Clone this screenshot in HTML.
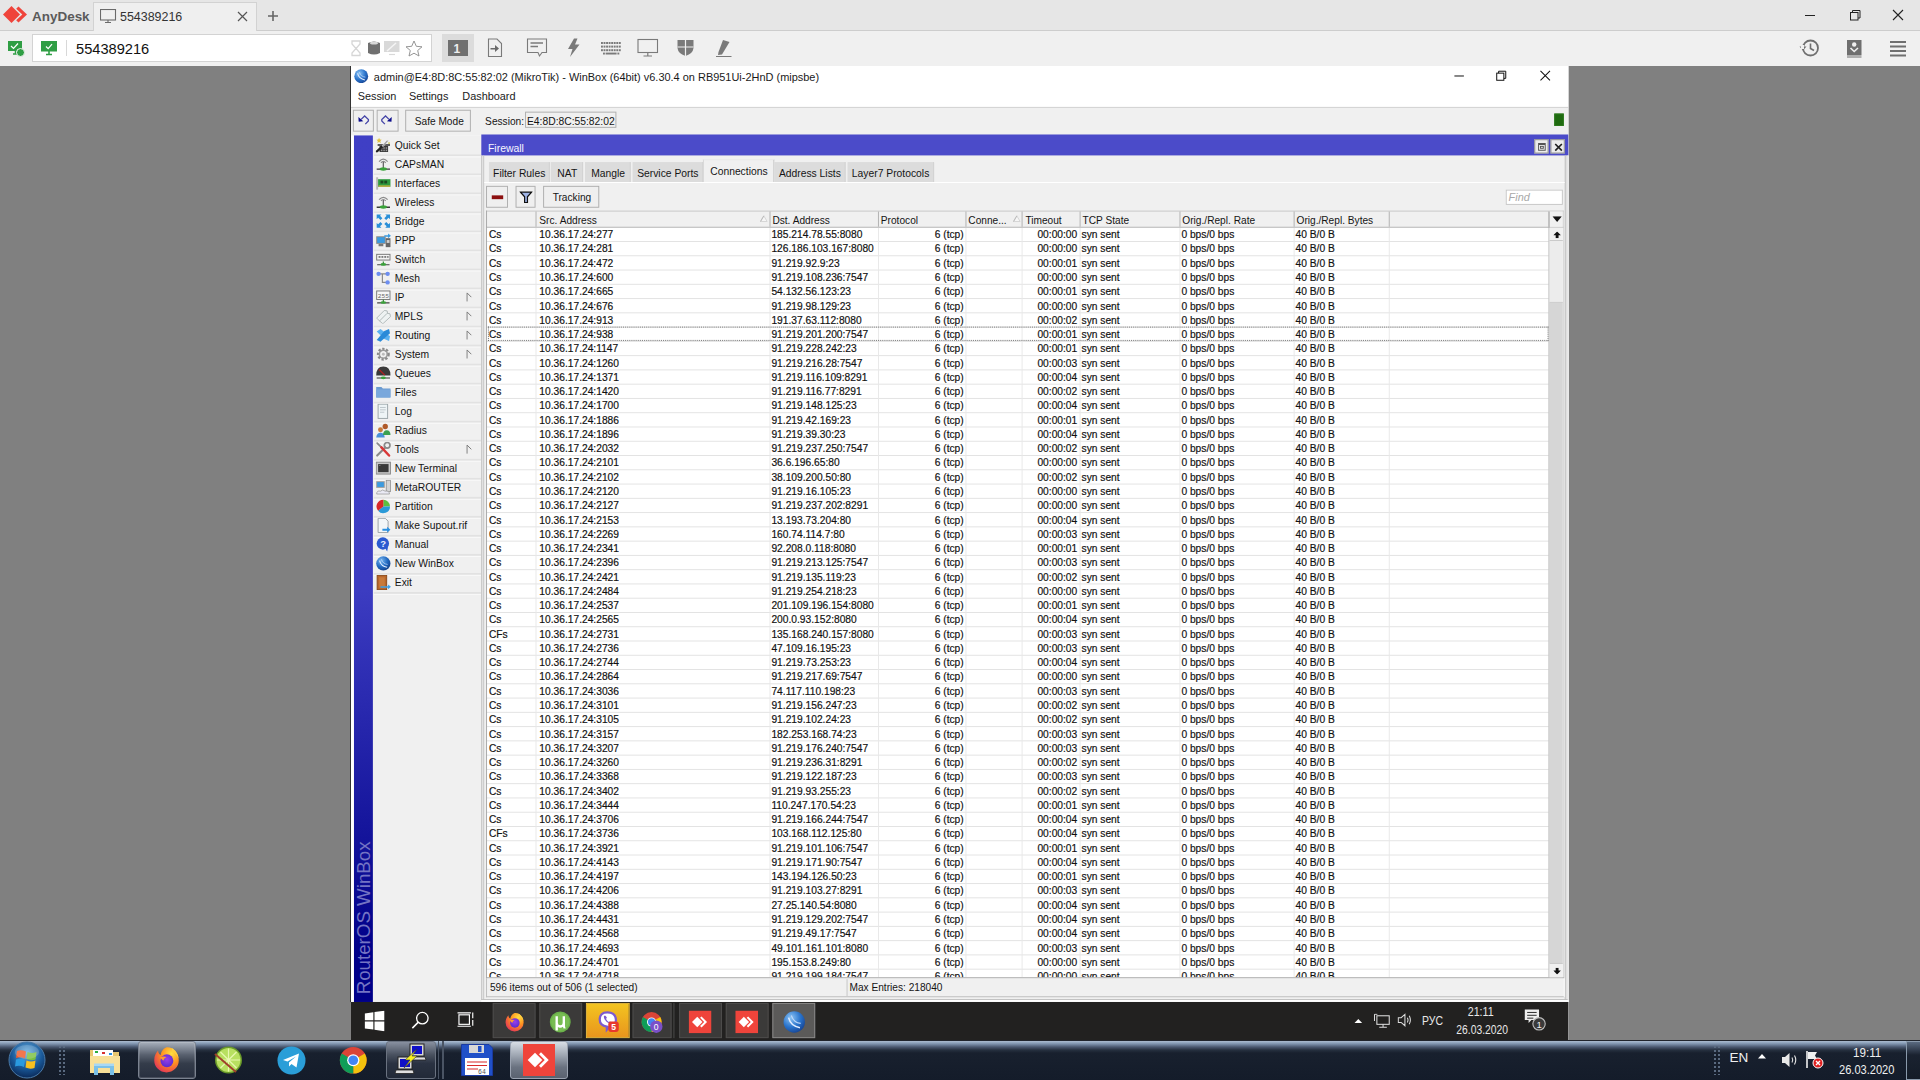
<!DOCTYPE html><html><head><meta charset="utf-8"><style>html,body{margin:0;padding:0;}body{width:1920px;height:1080px;overflow:hidden;position:relative;background:#808080;font-family:"Liberation Sans", sans-serif;color:#222;}div{box-sizing:border-box;}.r{position:absolute;left:0;height:15px;width:100%;}.c{position:absolute;top:1.2px;white-space:nowrap;font-size:11.7px;line-height:12px;transform:scaleX(0.92);transform-origin:0 0;color:#111;-webkit-text-stroke:0.2px #111;}.cr{transform-origin:100% 0;}</style></head><body><div style="position:absolute;left:0px;top:0px;width:1920px;height:31px;background:#e6e6e6;border-bottom:1px solid #cdcdcd;"></div><svg style="position:absolute;left:2px;top:5px" width="26" height="20" viewBox="0 0 26 20"><path d="M1 9.5 L9.5 1 L18 9.5 L9.5 18 Z" fill="#ef443b"/><path d="M16.5 1.5 L25 9.5 L16.5 17.5 L14.2 15.2 L20.3 9.5 L14.2 3.8 Z" fill="#ef443b"/></svg><div style="position:absolute;left:32px;top:10.04px;font-size:13.6px;line-height:13.6px;white-space:nowrap;transform:scaleX(0.99);transform-origin:0 0;font-weight:bold;color:#5a5a5a;">AnyDesk</div><div style="position:absolute;left:93px;top:2px;width:164px;height:29px;background:#efefef;border:1px solid #d2d2d2;border-bottom:none;"></div><svg style="position:absolute;left:100px;top:9px" width="17" height="15" viewBox="0 0 17 15"><rect x="0.5" y="0.5" width="15" height="10.5" fill="none" stroke="#6a6a6a" stroke-width="1.1"/><path d="M8 11 V13.5 M5 13.5 H11" stroke="#6a6a6a" stroke-width="1.1"/></svg><div style="position:absolute;left:120px;top:9.84px;font-size:13.6px;line-height:13.6px;white-space:nowrap;transform:scaleX(0.915);transform-origin:0 0;color:#333;">554389216</div><svg style="position:absolute;left:237px;top:11px" width="11" height="11" viewBox="0 0 11 11"><path d="M1 1 L10 10 M10 1 L1 10" stroke="#555" stroke-width="1.2"/></svg><svg style="position:absolute;left:267px;top:10px" width="12" height="12" viewBox="0 0 12 12"><path d="M6 1 V11 M1 6 H11" stroke="#666" stroke-width="1.6"/></svg><svg style="position:absolute;left:1803px;top:9px" width="104" height="13" viewBox="0 0 104 13"><path d="M2 6.5 H12" stroke="#222" stroke-width="1"/><rect x="47.5" y="3.5" width="7.5" height="7.5" fill="none" stroke="#222"/><path d="M49.5 3.5 V1.5 H57 V9 H55" fill="none" stroke="#222"/><path d="M90 1 L100 11 M100 1 L90 11" stroke="#222" stroke-width="1.1"/></svg><div style="position:absolute;left:0px;top:31px;width:1920px;height:35px;background:#f0f0f0;"></div><svg style="position:absolute;left:7px;top:40px" width="18" height="17" viewBox="0 0 18 17"><rect x="1" y="1" width="14" height="10" fill="#2f9e44"/><path d="M6 14 H11 M8.5 11 V14" stroke="#2f9e44" stroke-width="1.5"/><path d="M4 6 L6.5 8.5 L11 3.5" fill="none" stroke="#fff" stroke-width="1.2"/><circle cx="13.5" cy="12.5" r="4" fill="#2f9e44" stroke="#f0f0f0" stroke-width="1"/></svg><div style="position:absolute;left:32px;top:34px;width:400px;height:28px;background:#fff;border:1px solid #d3d3d3;"></div><svg style="position:absolute;left:41px;top:41px" width="17" height="15" viewBox="0 0 17 15"><rect x="0" y="0" width="16" height="10.5" fill="#2f9e44"/><path d="M5 13.5 H11 M8 10 V13.5" stroke="#2f9e44" stroke-width="1.6"/><path d="M5 5.5 L7.2 7.7 L11 3.2" fill="none" stroke="#fff" stroke-width="1.2"/></svg><div style="position:absolute;left:66px;top:40px;width:1px;height:16px;background:#d8d8d8;"></div><div style="position:absolute;left:76.2px;top:40.91px;font-size:15.4px;line-height:15.4px;white-space:nowrap;transform:scaleX(0.95);transform-origin:0 0;color:#111;">554389216</div><svg style="position:absolute;left:350px;top:40px" width="75" height="17" viewBox="0 0 75 17"><path d="M2 1 H10 V4 L6 8.5 L10 13 V15.5 H2 V13 L6 8.5 L2 4 Z" fill="none" stroke="#d6d6d6" stroke-width="1.3"/><path d="M18 3 Q24 0 30 3 V13 Q24 16 18 13 Z" fill="#707070"/><ellipse cx="24" cy="3.2" rx="4" ry="1.4" fill="#d8d8d8"/><rect x="34" y="1" width="15.5" height="11" fill="#d9d9d9"/><path d="M37 11 L46 3" stroke="#f5f5f5" stroke-width="1.5"/><path d="M39 14.5 H45" stroke="#d9d9d9" stroke-width="1.2"/><path d="M64 1 L66.3 6.3 L72 6.8 L67.7 10.5 L69 16 L64 13.2 L59 16 L60.3 10.5 L56 6.8 L61.7 6.3 Z" fill="none" stroke="#8a8a8a" stroke-width="0.9"/></svg><div style="position:absolute;left:442px;top:34px;width:32px;height:28px;background:#dcdcdc;"></div><div style="position:absolute;left:448px;top:40px;width:20px;height:16px;background:#707070;"></div><div style="position:absolute;left:453.5px;top:43.3px;font-size:12px;line-height:12px;white-space:nowrap;color:#eee;font-weight:bold;">1</div><svg style="position:absolute;left:486px;top:38px" width="250" height="20" viewBox="0 0 250 20"><path d="M2.5 1 H11 L15.5 5.5 V18.5 H2.5 Z" fill="none" stroke="#7a7a7a" stroke-width="1.1"/><path d="M4.5 10 H9 V7 L13 10.5 L9 14 V11.5 H4.5 Z" fill="#6a6a6a"/><path d="M41.5 1 H60.5 V14.5 H56 L53.5 18 L52 14.5 H41.5 Z" fill="none" stroke="#7a7a7a" stroke-width="1.1"/><path d="M44.5 5 H57 M44.5 8.5 H52" stroke="#7a7a7a" stroke-width="1.3"/><path d="M88 0.5 L82 11 H86.5 L84 19 L93.5 6.5 H89 L91.5 0.5 Z" fill="#7a7a7a"/><g fill="#7a7a7a"><rect x="115.0" y="4" width="1.9" height="2"/><rect x="117.55" y="4" width="1.9" height="2"/><rect x="120.1" y="4" width="1.9" height="2"/><rect x="122.65" y="4" width="1.9" height="2"/><rect x="125.2" y="4" width="1.9" height="2"/><rect x="127.75" y="4" width="1.9" height="2"/><rect x="130.3" y="4" width="1.9" height="2"/><rect x="132.85" y="4" width="1.9" height="2"/><rect x="115.0" y="7.6" width="1.9" height="2"/><rect x="117.55" y="7.6" width="1.9" height="2"/><rect x="120.1" y="7.6" width="1.9" height="2"/><rect x="122.65" y="7.6" width="1.9" height="2"/><rect x="125.2" y="7.6" width="1.9" height="2"/><rect x="127.75" y="7.6" width="1.9" height="2"/><rect x="130.3" y="7.6" width="1.9" height="2"/><rect x="132.85" y="7.6" width="1.9" height="2"/><rect x="115.0" y="11.2" width="1.9" height="2"/><rect x="117.55" y="11.2" width="1.9" height="2"/><rect x="120.1" y="11.2" width="1.9" height="2"/><rect x="122.65" y="11.2" width="1.9" height="2"/><rect x="125.2" y="11.2" width="1.9" height="2"/><rect x="127.75" y="11.2" width="1.9" height="2"/><rect x="130.3" y="11.2" width="1.9" height="2"/><rect x="132.85" y="11.2" width="1.9" height="2"/><rect x="117" y="14.6" width="1.9" height="1.9"/><rect x="119.6" y="14.6" width="11" height="1.9"/><rect x="131.4" y="14.6" width="1.9" height="1.9"/></g><rect x="152" y="1.5" width="19.5" height="13" fill="none" stroke="#7a7a7a" stroke-width="1.1"/><path d="M161.8 14.5 V17.5 M157.5 18 H166" stroke="#7a7a7a" stroke-width="1.2"/><path d="M191.5 2 H207.5 V10 Q207 15.5 199.5 18 Q192 15.5 191.5 10 Z" fill="#7a7a7a"/><path d="M199.5 2 V18 M191.5 9 H207.5" stroke="#f0f0f0" stroke-width="1.2"/><path d="M237 2 L243.5 4 L236 16.5 L232 17 L232.5 14 Z" fill="#7a7a7a"/><path d="M230 18.5 H245.5" stroke="#7a7a7a" stroke-width="1"/></svg><svg style="position:absolute;left:1799px;top:38px" width="110" height="20" viewBox="0 0 110 20"><circle cx="11.5" cy="10" r="7.5" fill="none" stroke="#6f6f6f" stroke-width="1.8"/><path d="M11.5 5.5 V10.5 L15 12.5" fill="none" stroke="#6f6f6f" stroke-width="1.6"/><path d="M0.5 8.5 L4 12.5 L7.5 8.5 Z" fill="#6f6f6f"/><rect x="2" y="7" width="3" height="4" fill="#f0f0f0"/><rect x="48" y="2" width="14.5" height="15.5" fill="#6f6f6f"/><circle cx="55.2" cy="6.5" r="2.2" fill="#f0f0f0"/><path d="M51.5 10 L55.2 13.5 L59 10" fill="none" stroke="#f0f0f0" stroke-width="1.6"/><path d="M48 19 H62.5" stroke="#6f6f6f" stroke-width="1"/><g fill="#6f6f6f"><rect x="91" y="3" width="16" height="2"/><rect x="91" y="7.5" width="16" height="2"/><rect x="91" y="12" width="16" height="2"/><rect x="91" y="16.5" width="16" height="2"/></g></svg><div style="position:absolute;left:350.5px;top:66px;width:1280px;height:1024px;transform:scale(0.9512);transform-origin:0 0;overflow:hidden;background:#fff"><div style="position:absolute;left:0px;top:0px;width:1280px;height:44.15px;background:#fff;"></div><div style="position:absolute;left:-0.53px;top:43.1px;width:1282.59px;height:1.05px;background:#c9c9c9;"></div><div style="position:absolute;left:3.05px;top:2.94px"><svg width="15.5" height="15.5" viewBox="0 0 16 16" style="display:block"><defs><radialGradient id="tw" cx="0.35" cy="0.3" r="0.8"><stop offset="0" stop-color="#8cc4f4"/><stop offset="0.55" stop-color="#2a74cc"/><stop offset="1" stop-color="#143e8c"/></radialGradient></defs><circle cx="8" cy="8" r="7.5" fill="url(#tw)"/><path d="M4 5 Q5.5 11 12 12" fill="none" stroke="#e0ecff" stroke-width="1.1"/><path d="M6 3.5 Q7.5 8.5 12.5 9" fill="none" stroke="#c0d8f8" stroke-width="0.8"/></svg></div><div style="position:absolute;left:23.65px;top:6.03px;font-size:11.7px;line-height:11.7px;white-space:nowrap;transform:scaleX(0.985);transform-origin:0 0;color:#1a1a1a;">admin@E4:8D:8C:55:82:02 (MikroTik) - WinBox (64bit) v6.30.4 on RB951Ui-2HnD (mipsbe)</div><svg style="position:absolute;left:1159.06px;top:3.57px" width="110" height="12" viewBox="0 0 110 12"><path d="M1 6.5 H11" stroke="#111" stroke-width="1.05"/><rect x="45.5" y="3.5" width="7.5" height="7.5" fill="none" stroke="#111" stroke-width="1.05"/><path d="M47.5 3.5 V1.5 H55 V9 H53" fill="none" stroke="#111" stroke-width="1.05"/><path d="M91.5 1 L101.5 11 M101.5 1 L91.5 11" stroke="#111" stroke-width="1.1"/></svg><div style="position:absolute;left:7.46px;top:27.19px;font-size:11.8px;line-height:11.8px;white-space:nowrap;transform:scaleX(0.97);transform-origin:0 0;color:#1a1a1a;">Session</div><div style="position:absolute;left:61.29px;top:27.19px;font-size:11.8px;line-height:11.8px;white-space:nowrap;transform:scaleX(0.97);transform-origin:0 0;color:#1a1a1a;">Settings</div><div style="position:absolute;left:117.01px;top:27.19px;font-size:11.8px;line-height:11.8px;white-space:nowrap;transform:scaleX(0.97);transform-origin:0 0;color:#1a1a1a;">Dashboard</div><div style="position:absolute;left:0px;top:44.15px;width:1280px;height:28.39px;background:#f0f0f0;"></div><div style="position:absolute;left:2.21px;top:46.26px;width:22.08px;height:22.71px;border:1px solid #adadad;background:#efefef;"></div><div style="position:absolute;left:27.23px;top:46.26px;width:22.29px;height:22.71px;border:1px solid #adadad;background:#efefef;"></div><svg style="position:absolute;left:1.58px;top:46.26px" width="23.13" height="23.13" viewBox="0 0 22 22"><path d="M5.5 7.2 L5.8 11.9 L10.4 11.6 Z" fill="#0c0c8c"/><path d="M8.2 9.6 L11.75 6.25 L15.5 9.7 V11.25 L12.4 14.4" fill="none" stroke="#4646a8" stroke-width="1.3"/></svg><svg style="position:absolute;left:26.81px;top:46.26px" width="23.13" height="23.13" viewBox="0 0 22 22"><g transform="translate(20.6 0) scale(-1 1)"><path d="M5.5 7.2 L5.8 11.9 L10.4 11.6 Z" fill="#0c0c8c"/><path d="M8.2 9.6 L11.75 6.25 L15.5 9.7 V11.25 L12.4 14.4" fill="none" stroke="#4646a8" stroke-width="1.3"/></g></svg><div style="position:absolute;left:57.09px;top:46.26px;width:69.18px;height:22.71px;border:1px solid #adadad;background:#efefef;"></div><div style="position:absolute;left:66.76px;top:51.75px;font-size:11.6px;line-height:11.6px;white-space:nowrap;transform:scaleX(0.92);transform-origin:0 0;color:#151515;">Safe Mode</div><div style="position:absolute;left:140.87px;top:51.75px;font-size:11.6px;line-height:11.6px;white-space:nowrap;transform:scaleX(0.92);transform-origin:0 0;color:#151515;">Session:</div><div style="position:absolute;left:182.72px;top:48.36px;width:96.19px;height:17.14px;border:1px solid #adadad;background:#f0f0f0;"></div><div style="position:absolute;left:185.34px;top:51.75px;font-size:11.6px;line-height:11.6px;white-space:nowrap;transform:scaleX(0.935);transform-origin:0 0;color:#151515;">E4:8D:8C:55:82:02</div><div style="position:absolute;left:1265.03px;top:50.46px;width:9.99px;height:12.62px;background:#1f6a10;border:1px solid #2c7a1c;"></div><div style="position:absolute;left:0px;top:73.07px;width:137.2px;height:910.93px;background:#f0f0f0;"></div><div style="position:absolute;left:2.63px;top:73.07px;width:19.97px;height:910.93px;background:linear-gradient(to bottom,#3f3fc5 0px,#3c3cc1 477.82px,#000088 861.54px,#000088 1000px);"></div><div style="position:absolute;left:0px;top:73.07px;width:2.63px;height:910.93px;background:#fff;"></div><div style="position:absolute;left:3.13px;top:975.61px;transform:rotate(-90deg);transform-origin:0 0;font-size:19.7px;line-height:20px;color:#7474c4;white-space:nowrap;">RouterOS WinBox</div><div style="position:absolute;left:22.6px;top:73.99px;width:114.07px;height:20px;"><div style="position:absolute;left:23.76px;top:2.99px;font-size:11.8px;line-height:12px;white-space:nowrap;transform:scaleX(0.92);transform-origin:0 0;color:#151515">Quick Set</div><div style="position:absolute;left:3.89px;top:1.5px;width:16px;height:16px;"><svg width="16" height="16" viewBox="0 0 16 16" style="display:block"><path d="M2 8 H15" stroke="#2a2a2a" stroke-width="1.6"/><path d="M4 9 H13 V15.5 H4 Z" fill="#3a3a3a"/><g fill="#9a9a9a"><rect x="5.5" y="10.5" width="1.5" height="1.5"/><rect x="8" y="10.5" width="1.5" height="1.5"/><rect x="10.5" y="10.5" width="1.5" height="1.5"/><rect x="5.5" y="13" width="1.5" height="1.5"/><rect x="8" y="13" width="1.5" height="1.5"/><rect x="10.5" y="13" width="1.5" height="1.5"/></g><path d="M1 15 L7 9.5" stroke="#222" stroke-width="2.2" stroke-linecap="round"/><path d="M7 9.5 L12.5 3.5" stroke="#dcdcdc" stroke-width="2"/><path d="M7.5 9 L12.5 3.5" stroke="#555" stroke-width="0.7"/><path d="M3.5 0.5 L4.3 2.4 L6.3 2.6 L4.8 3.9 L5.3 5.9 L3.5 4.8 L1.7 5.9 L2.2 3.9 L0.7 2.6 L2.7 2.4 Z" fill="#e0c040"/><circle cx="14" cy="6" r="0.9" fill="#c8c040"/></svg></div></div><div style="position:absolute;left:24.1px;top:93.39px;width:112.57px;height:1.2px;background:#e2e2e2;"></div><div style="position:absolute;left:24.1px;top:94.59px;width:112.57px;height:1px;background:#fafafa;"></div><div style="position:absolute;left:22.6px;top:93.99px;width:114.07px;height:20px;"><div style="position:absolute;left:23.76px;top:2.99px;font-size:11.8px;line-height:12px;white-space:nowrap;transform:scaleX(0.92);transform-origin:0 0;color:#151515">CAPsMAN</div><div style="position:absolute;left:3.89px;top:1.5px;width:16px;height:16px;"><svg width="16" height="16" viewBox="0 0 16 16" style="display:block"><path d="M3.5 5.5 Q8 0.5 12.5 5.5" fill="none" stroke="#8a8a8a" stroke-width="1.3"/><path d="M5.5 6.8 Q8 3.8 10.5 6.8" fill="none" stroke="#8a8a8a" stroke-width="1.2"/><path d="M8 6 V12.5" stroke="#6a6a6a" stroke-width="1.4"/><path d="M1 13.5 H15" stroke="#3a3a3a" stroke-width="1.4"/><ellipse cx="8" cy="13.3" rx="3.8" ry="1.8" fill="#3aa33a"/></svg></div></div><div style="position:absolute;left:24.1px;top:113.39px;width:112.57px;height:1.2px;background:#e2e2e2;"></div><div style="position:absolute;left:24.1px;top:114.59px;width:112.57px;height:1px;background:#fafafa;"></div><div style="position:absolute;left:22.6px;top:113.99px;width:114.07px;height:20px;"><div style="position:absolute;left:23.76px;top:2.99px;font-size:11.8px;line-height:12px;white-space:nowrap;transform:scaleX(0.92);transform-origin:0 0;color:#151515">Interfaces</div><div style="position:absolute;left:3.89px;top:1.5px;width:16px;height:16px;"><svg width="16" height="16" viewBox="0 0 16 16" style="display:block"><rect x="0.5" y="2" width="2" height="13" fill="#b8b8b8"/><rect x="2.5" y="4" width="13" height="8" fill="#2e9a3e"/><rect x="5" y="5.5" width="3" height="3" fill="#1c4a20"/><rect x="9" y="5.5" width="3" height="3" fill="#1c4a20"/><rect x="3" y="10.5" width="12" height="1.5" fill="#c8b040"/></svg></div></div><div style="position:absolute;left:24.1px;top:133.39px;width:112.57px;height:1.2px;background:#e2e2e2;"></div><div style="position:absolute;left:24.1px;top:134.59px;width:112.57px;height:1px;background:#fafafa;"></div><div style="position:absolute;left:22.6px;top:133.99px;width:114.07px;height:20px;"><div style="position:absolute;left:23.76px;top:2.99px;font-size:11.8px;line-height:12px;white-space:nowrap;transform:scaleX(0.92);transform-origin:0 0;color:#151515">Wireless</div><div style="position:absolute;left:3.89px;top:1.5px;width:16px;height:16px;"><svg width="16" height="16" viewBox="0 0 16 16" style="display:block"><path d="M3.5 5.5 Q8 0.5 12.5 5.5" fill="none" stroke="#8a8a8a" stroke-width="1.3"/><path d="M5.5 6.8 Q8 3.8 10.5 6.8" fill="none" stroke="#8a8a8a" stroke-width="1.2"/><path d="M8 6 V12.5" stroke="#6a6a6a" stroke-width="1.4"/><path d="M1 13.5 H15" stroke="#3a3a3a" stroke-width="1.4"/><ellipse cx="8" cy="13.3" rx="3.8" ry="1.8" fill="#3aa33a"/></svg></div></div><div style="position:absolute;left:24.1px;top:153.39px;width:112.57px;height:1.2px;background:#e2e2e2;"></div><div style="position:absolute;left:24.1px;top:154.59px;width:112.57px;height:1px;background:#fafafa;"></div><div style="position:absolute;left:22.6px;top:153.99px;width:114.07px;height:20px;"><div style="position:absolute;left:23.76px;top:2.99px;font-size:11.8px;line-height:12px;white-space:nowrap;transform:scaleX(0.92);transform-origin:0 0;color:#151515">Bridge</div><div style="position:absolute;left:3.89px;top:1.5px;width:16px;height:16px;"><svg width="16" height="16" viewBox="0 0 16 16" style="display:block"><g fill="#2a8fd8"><path d="M1 1 H6 L4.5 2.5 L7 5 L5 7 L2.5 4.5 L1 6 Z"/><path d="M15 1 V6 L13.5 4.5 L11 7 L9 5 L11.5 2.5 L10 1 Z"/><path d="M1 15 V10 L2.5 11.5 L5 9 L7 11 L4.5 13.5 L6 15 Z"/><path d="M15 15 H10 L11.5 13.5 L9 11 L11 9 L13.5 11.5 L15 10 Z"/></g></svg></div></div><div style="position:absolute;left:24.1px;top:173.39px;width:112.57px;height:1.2px;background:#e2e2e2;"></div><div style="position:absolute;left:24.1px;top:174.59px;width:112.57px;height:1px;background:#fafafa;"></div><div style="position:absolute;left:22.6px;top:173.99px;width:114.07px;height:20px;"><div style="position:absolute;left:23.76px;top:2.99px;font-size:11.8px;line-height:12px;white-space:nowrap;transform:scaleX(0.92);transform-origin:0 0;color:#151515">PPP</div><div style="position:absolute;left:3.89px;top:1.5px;width:16px;height:16px;"><svg width="16" height="16" viewBox="0 0 16 16" style="display:block"><rect x="0.5" y="4" width="10" height="8" fill="#8a8a8a"/><rect x="1.5" y="5" width="8" height="6" fill="#3a9ae0"/><rect x="3" y="12" width="5" height="2.5" fill="#777"/><rect x="10.5" y="6" width="5" height="9.5" fill="#666"/><rect x="11.5" y="8" width="3" height="3" fill="#cfcfcf"/><path d="M9 3 H13 V1 L16 3.5 L13 6 V4.5 H9 Z" fill="#3a9ae0"/></svg></div></div><div style="position:absolute;left:24.1px;top:193.39px;width:112.57px;height:1.2px;background:#e2e2e2;"></div><div style="position:absolute;left:24.1px;top:194.59px;width:112.57px;height:1px;background:#fafafa;"></div><div style="position:absolute;left:22.6px;top:193.99px;width:114.07px;height:20px;"><div style="position:absolute;left:23.76px;top:2.99px;font-size:11.8px;line-height:12px;white-space:nowrap;transform:scaleX(0.92);transform-origin:0 0;color:#151515">Switch</div><div style="position:absolute;left:3.89px;top:1.5px;width:16px;height:16px;"><svg width="16" height="16" viewBox="0 0 16 16" style="display:block"><rect x="1" y="3" width="14" height="6" fill="#f4f4f4" stroke="#777" stroke-width="1"/><g fill="#555"><rect x="3" y="5" width="2" height="1.5"/><rect x="6" y="5" width="2" height="1.5"/><rect x="9" y="5" width="2" height="1.5"/><rect x="12" y="5" width="1.5" height="1.5"/></g><path d="M1.5 14 H14.5" stroke="#444" stroke-width="1.2"/><ellipse cx="8" cy="13.6" rx="3" ry="1.4" fill="#3aa33a"/><path d="M8 10.5 V13" stroke="#3a8a3a" stroke-width="1.3"/></svg></div></div><div style="position:absolute;left:24.1px;top:213.39px;width:112.57px;height:1.2px;background:#e2e2e2;"></div><div style="position:absolute;left:24.1px;top:214.59px;width:112.57px;height:1px;background:#fafafa;"></div><div style="position:absolute;left:22.6px;top:213.99px;width:114.07px;height:20px;"><div style="position:absolute;left:23.76px;top:2.99px;font-size:11.8px;line-height:12px;white-space:nowrap;transform:scaleX(0.92);transform-origin:0 0;color:#151515">Mesh</div><div style="position:absolute;left:3.89px;top:1.5px;width:16px;height:16px;"><svg width="16" height="16" viewBox="0 0 16 16" style="display:block"><path d="M3 3.5 H7 V12.5 H12 M7 3.5 H12" fill="none" stroke="#888" stroke-width="1.2"/><circle cx="3" cy="3.5" r="2.3" fill="#6d8ef0"/><circle cx="12.5" cy="3.5" r="2.3" fill="#6d8ef0"/><circle cx="12.5" cy="12.5" r="2.3" fill="#6d8ef0"/></svg></div></div><div style="position:absolute;left:24.1px;top:233.39px;width:112.57px;height:1.2px;background:#e2e2e2;"></div><div style="position:absolute;left:24.1px;top:234.59px;width:112.57px;height:1px;background:#fafafa;"></div><div style="position:absolute;left:22.6px;top:233.99px;width:114.07px;height:20px;"><div style="position:absolute;left:23.76px;top:2.99px;font-size:11.8px;line-height:12px;white-space:nowrap;transform:scaleX(0.92);transform-origin:0 0;color:#151515">IP</div><svg style="position:absolute;left:98.82px;top:4.5px" width="7" height="10" viewBox="0 0 7 10"><path d="M1 0.5 V9.5 M1 0.5 L5.5 5" fill="none" stroke="#777" stroke-width="1"/></svg><div style="position:absolute;left:3.89px;top:1.5px;width:16px;height:16px;"><svg width="16" height="16" viewBox="0 0 16 16" style="display:block"><rect x="1" y="1.5" width="14" height="9" fill="#f6f6f6" stroke="#777" stroke-width="1"/><text x="2.2" y="8.6" font-size="6.5" font-family="Liberation Mono" fill="#666">255</text><path d="M1.5 14 H14.5" stroke="#444" stroke-width="1.2"/><ellipse cx="8" cy="13.6" rx="3" ry="1.4" fill="#3aa33a"/><path d="M8 10.5 V13" stroke="#3a8a3a" stroke-width="1.3"/></svg></div></div><div style="position:absolute;left:24.1px;top:253.39px;width:112.57px;height:1.2px;background:#e2e2e2;"></div><div style="position:absolute;left:24.1px;top:254.59px;width:112.57px;height:1px;background:#fafafa;"></div><div style="position:absolute;left:22.6px;top:253.99px;width:114.07px;height:20px;"><div style="position:absolute;left:23.76px;top:2.99px;font-size:11.8px;line-height:12px;white-space:nowrap;transform:scaleX(0.92);transform-origin:0 0;color:#151515">MPLS</div><svg style="position:absolute;left:98.82px;top:4.5px" width="7" height="10" viewBox="0 0 7 10"><path d="M1 0.5 V9.5 M1 0.5 L5.5 5" fill="none" stroke="#777" stroke-width="1"/></svg><div style="position:absolute;left:3.89px;top:1.5px;width:16px;height:16px;"><svg width="16" height="16" viewBox="0 0 16 16" style="display:block"><path d="M1 10 L9 2 L12 2.5 L12.5 5.5 L4.5 13.5 Z" fill="#eef2f2" stroke="#b0b8b8" stroke-width="1"/><path d="M4 13 L12 5 L15 5.5 L15.5 8.5 L7.5 16 Z" fill="#eef2f2" stroke="#b0b8b8" stroke-width="1"/></svg></div></div><div style="position:absolute;left:24.1px;top:273.39px;width:112.57px;height:1.2px;background:#e2e2e2;"></div><div style="position:absolute;left:24.1px;top:274.59px;width:112.57px;height:1px;background:#fafafa;"></div><div style="position:absolute;left:22.6px;top:273.99px;width:114.07px;height:20px;"><div style="position:absolute;left:23.76px;top:2.99px;font-size:11.8px;line-height:12px;white-space:nowrap;transform:scaleX(0.92);transform-origin:0 0;color:#151515">Routing</div><svg style="position:absolute;left:98.82px;top:4.5px" width="7" height="10" viewBox="0 0 7 10"><path d="M1 0.5 V9.5 M1 0.5 L5.5 5" fill="none" stroke="#777" stroke-width="1"/></svg><div style="position:absolute;left:3.89px;top:1.5px;width:16px;height:16px;"><svg width="16" height="16" viewBox="0 0 16 16" style="display:block"><path d="M1 4 L5 1.5 L15 9 L14 14 L9 12 Z" fill="#5ab0f0"/><path d="M1 13 L5 15 L15 6 L14 1.5 L9 3.5 Z" fill="#2a8ad8"/></svg></div></div><div style="position:absolute;left:24.1px;top:293.39px;width:112.57px;height:1.2px;background:#e2e2e2;"></div><div style="position:absolute;left:24.1px;top:294.59px;width:112.57px;height:1px;background:#fafafa;"></div><div style="position:absolute;left:22.6px;top:293.99px;width:114.07px;height:20px;"><div style="position:absolute;left:23.76px;top:2.99px;font-size:11.8px;line-height:12px;white-space:nowrap;transform:scaleX(0.92);transform-origin:0 0;color:#151515">System</div><svg style="position:absolute;left:98.82px;top:4.5px" width="7" height="10" viewBox="0 0 7 10"><path d="M1 0.5 V9.5 M1 0.5 L5.5 5" fill="none" stroke="#777" stroke-width="1"/></svg><div style="position:absolute;left:3.89px;top:1.5px;width:16px;height:16px;"><svg width="16" height="16" viewBox="0 0 16 16" style="display:block"><circle cx="8" cy="8" r="5.2" fill="none" stroke="#8a8a8a" stroke-width="3.2" stroke-dasharray="2.2 1.6"/><circle cx="8" cy="8" r="4.2" fill="none" stroke="#9a9a9a" stroke-width="1.6"/><circle cx="8" cy="8" r="1.5" fill="#bbb"/></svg></div></div><div style="position:absolute;left:24.1px;top:313.39px;width:112.57px;height:1.2px;background:#e2e2e2;"></div><div style="position:absolute;left:24.1px;top:314.59px;width:112.57px;height:1px;background:#fafafa;"></div><div style="position:absolute;left:22.6px;top:313.99px;width:114.07px;height:20px;"><div style="position:absolute;left:23.76px;top:2.99px;font-size:11.8px;line-height:12px;white-space:nowrap;transform:scaleX(0.92);transform-origin:0 0;color:#151515">Queues</div><div style="position:absolute;left:3.89px;top:1.5px;width:16px;height:16px;"><svg width="16" height="16" viewBox="0 0 16 16" style="display:block"><path d="M0.5 10.5 Q0.5 1 8 1 Q15.5 1 15.5 10.5 Z" fill="#3a3a3a"/><path d="M3.5 4 L9.5 10" stroke="#b02020" stroke-width="1.4"/><path d="M1 13 H15" stroke="#333" stroke-width="1.2"/><ellipse cx="8" cy="12.8" rx="2.6" ry="1.4" fill="#3aa33a"/></svg></div></div><div style="position:absolute;left:24.1px;top:333.39px;width:112.57px;height:1.2px;background:#e2e2e2;"></div><div style="position:absolute;left:24.1px;top:334.59px;width:112.57px;height:1px;background:#fafafa;"></div><div style="position:absolute;left:22.6px;top:333.99px;width:114.07px;height:20px;"><div style="position:absolute;left:23.76px;top:2.99px;font-size:11.8px;line-height:12px;white-space:nowrap;transform:scaleX(0.92);transform-origin:0 0;color:#151515">Files</div><div style="position:absolute;left:3.89px;top:1.5px;width:16px;height:16px;"><svg width="16" height="16" viewBox="0 0 16 16" style="display:block"><path d="M0.5 2.5 H6 L7.5 4 H15.5 V13.5 H0.5 Z" fill="#6a9ad0"/><rect x="0.5" y="5" width="15" height="8.5" fill="#7aa8dc"/></svg></div></div><div style="position:absolute;left:24.1px;top:353.39px;width:112.57px;height:1.2px;background:#e2e2e2;"></div><div style="position:absolute;left:24.1px;top:354.59px;width:112.57px;height:1px;background:#fafafa;"></div><div style="position:absolute;left:22.6px;top:353.99px;width:114.07px;height:20px;"><div style="position:absolute;left:23.76px;top:2.99px;font-size:11.8px;line-height:12px;white-space:nowrap;transform:scaleX(0.92);transform-origin:0 0;color:#151515">Log</div><div style="position:absolute;left:3.89px;top:1.5px;width:16px;height:16px;"><svg width="16" height="16" viewBox="0 0 16 16" style="display:block"><rect x="2.5" y="0.5" width="10" height="15" fill="#eef4f6" stroke="#9aa4a8" stroke-width="1"/><path d="M4.5 4 H10.5 M4.5 6.5 H10.5 M4.5 9 H9" stroke="#b8c0c4" stroke-width="0.9"/></svg></div></div><div style="position:absolute;left:24.1px;top:373.39px;width:112.57px;height:1.2px;background:#e2e2e2;"></div><div style="position:absolute;left:24.1px;top:374.59px;width:112.57px;height:1px;background:#fafafa;"></div><div style="position:absolute;left:22.6px;top:373.99px;width:114.07px;height:20px;"><div style="position:absolute;left:23.76px;top:2.99px;font-size:11.8px;line-height:12px;white-space:nowrap;transform:scaleX(0.92);transform-origin:0 0;color:#151515">Radius</div><div style="position:absolute;left:3.89px;top:1.5px;width:16px;height:16px;"><svg width="16" height="16" viewBox="0 0 16 16" style="display:block"><circle cx="5" cy="7.5" r="2.6" fill="#c87a3a"/><circle cx="10" cy="4" r="2.8" fill="#b05a2a"/><path d="M0.5 15.5 Q1 10.5 5 10.5 Q9 10.5 9.5 15.5 Z" fill="#4a90d8"/><path d="M7.5 13 Q8 8 11.5 8 Q15.5 8 15.5 13 Z" fill="#3aa050"/></svg></div></div><div style="position:absolute;left:24.1px;top:393.39px;width:112.57px;height:1.2px;background:#e2e2e2;"></div><div style="position:absolute;left:24.1px;top:394.59px;width:112.57px;height:1px;background:#fafafa;"></div><div style="position:absolute;left:22.6px;top:393.99px;width:114.07px;height:20px;"><div style="position:absolute;left:23.76px;top:2.99px;font-size:11.8px;line-height:12px;white-space:nowrap;transform:scaleX(0.92);transform-origin:0 0;color:#151515">Tools</div><svg style="position:absolute;left:98.82px;top:4.5px" width="7" height="10" viewBox="0 0 7 10"><path d="M1 0.5 V9.5 M1 0.5 L5.5 5" fill="none" stroke="#777" stroke-width="1"/></svg><div style="position:absolute;left:3.89px;top:1.5px;width:16px;height:16px;"><svg width="16" height="16" viewBox="0 0 16 16" style="display:block"><path d="M1.5 14.5 L10 6" stroke="#8a8a8a" stroke-width="2.2" stroke-linecap="round"/><circle cx="12" cy="3.8" r="3" fill="none" stroke="#8a8a8a" stroke-width="1.8"/><path d="M1.5 1.5 L6 6" stroke="#8a8a8a" stroke-width="1.8" stroke-linecap="round"/><path d="M6 6 L14 14.5" stroke="#d83838" stroke-width="2.6" stroke-linecap="round"/></svg></div></div><div style="position:absolute;left:24.1px;top:413.39px;width:112.57px;height:1.2px;background:#e2e2e2;"></div><div style="position:absolute;left:24.1px;top:414.59px;width:112.57px;height:1px;background:#fafafa;"></div><div style="position:absolute;left:22.6px;top:413.99px;width:114.07px;height:20px;"><div style="position:absolute;left:23.76px;top:2.99px;font-size:11.8px;line-height:12px;white-space:nowrap;transform:scaleX(0.92);transform-origin:0 0;color:#151515">New Terminal</div><div style="position:absolute;left:3.89px;top:1.5px;width:16px;height:16px;"><svg width="16" height="16" viewBox="0 0 16 16" style="display:block"><rect x="0.5" y="1.5" width="15" height="12.5" fill="#c8c8c8" stroke="#888" stroke-width="1"/><rect x="2.5" y="3.5" width="11" height="8.5" fill="#3a3a3a"/><path d="M3.5 5 H5" stroke="#888" stroke-width="0.8"/></svg></div></div><div style="position:absolute;left:24.1px;top:433.39px;width:112.57px;height:1.2px;background:#e2e2e2;"></div><div style="position:absolute;left:24.1px;top:434.59px;width:112.57px;height:1px;background:#fafafa;"></div><div style="position:absolute;left:22.6px;top:433.99px;width:114.07px;height:20px;"><div style="position:absolute;left:23.76px;top:2.99px;font-size:11.8px;line-height:12px;white-space:nowrap;transform:scaleX(0.92);transform-origin:0 0;color:#151515">MetaROUTER</div><div style="position:absolute;left:3.89px;top:1.5px;width:16px;height:16px;"><svg width="16" height="16" viewBox="0 0 16 16" style="display:block"><rect x="0.5" y="1.5" width="9" height="7" fill="#999"/><rect x="1.5" y="2.5" width="7" height="5" fill="#3a9ae0"/><rect x="11" y="0.5" width="4.5" height="12" fill="#d4d4d4" stroke="#888" stroke-width="0.8"/><path d="M1 15 Q1 11 5 12 Q7 9.5 10 12 Q14 11 14.5 15 Z" fill="#eaeaf4" stroke="#999" stroke-width="0.8"/></svg></div></div><div style="position:absolute;left:24.1px;top:453.39px;width:112.57px;height:1.2px;background:#e2e2e2;"></div><div style="position:absolute;left:24.1px;top:454.59px;width:112.57px;height:1px;background:#fafafa;"></div><div style="position:absolute;left:22.6px;top:453.99px;width:114.07px;height:20px;"><div style="position:absolute;left:23.76px;top:2.99px;font-size:11.8px;line-height:12px;white-space:nowrap;transform:scaleX(0.92);transform-origin:0 0;color:#151515">Partition</div><div style="position:absolute;left:3.89px;top:1.5px;width:16px;height:16px;"><svg width="16" height="16" viewBox="0 0 16 16" style="display:block"><path d="M8 8 L8 1 A7 7 0 0 1 15 8 Z" fill="#5cc040"/><path d="M8 8 L15 8 A7 7 0 0 1 2.5 12.5 Z" fill="#2a9ad8"/><path d="M8 8 L2.5 12.5 A7 7 0 0 1 8 1 Z" fill="#d82828"/></svg></div></div><div style="position:absolute;left:24.1px;top:473.39px;width:112.57px;height:1.2px;background:#e2e2e2;"></div><div style="position:absolute;left:24.1px;top:474.59px;width:112.57px;height:1px;background:#fafafa;"></div><div style="position:absolute;left:22.6px;top:473.99px;width:114.07px;height:20px;"><div style="position:absolute;left:23.76px;top:2.99px;font-size:11.8px;line-height:12px;white-space:nowrap;transform:scaleX(0.92);transform-origin:0 0;color:#151515">Make Supout.rif</div><div style="position:absolute;left:3.89px;top:1.5px;width:16px;height:16px;"><svg width="16" height="16" viewBox="0 0 16 16" style="display:block"><path d="M2.5 0.5 H10 L13 3.5 V15.5 H2.5 Z" fill="#f2f6f8" stroke="#98a0a4" stroke-width="1"/><path d="M7 11.5 H12 V9.5 L15.5 12.5 L12 15.5 V13.5 H7 Z" fill="#2a90e0"/></svg></div></div><div style="position:absolute;left:24.1px;top:493.39px;width:112.57px;height:1.2px;background:#e2e2e2;"></div><div style="position:absolute;left:24.1px;top:494.59px;width:112.57px;height:1px;background:#fafafa;"></div><div style="position:absolute;left:22.6px;top:493.99px;width:114.07px;height:20px;"><div style="position:absolute;left:23.76px;top:2.99px;font-size:11.8px;line-height:12px;white-space:nowrap;transform:scaleX(0.92);transform-origin:0 0;color:#151515">Manual</div><div style="position:absolute;left:3.89px;top:1.5px;width:16px;height:16px;"><svg width="16" height="16" viewBox="0 0 16 16" style="display:block"><circle cx="7.5" cy="7" r="6.5" fill="#2a5ad0"/><path d="M10 12 L12 15.5 L13 10.5 Z" fill="#2a5ad0"/><text x="4.8" y="11" font-size="10" font-weight="bold" font-family="Liberation Sans" fill="#e8eeff">?</text></svg></div></div><div style="position:absolute;left:24.1px;top:513.39px;width:112.57px;height:1.2px;background:#e2e2e2;"></div><div style="position:absolute;left:24.1px;top:514.59px;width:112.57px;height:1px;background:#fafafa;"></div><div style="position:absolute;left:22.6px;top:513.99px;width:114.07px;height:20px;"><div style="position:absolute;left:23.76px;top:2.99px;font-size:11.8px;line-height:12px;white-space:nowrap;transform:scaleX(0.92);transform-origin:0 0;color:#151515">New WinBox</div><div style="position:absolute;left:3.89px;top:1.5px;width:16px;height:16px;"><svg width="16" height="16" viewBox="0 0 16 16" style="display:block"><defs><radialGradient id="mg" cx="0.35" cy="0.3" r="0.8"><stop offset="0" stop-color="#7ab8f0"/><stop offset="0.55" stop-color="#2068c0"/><stop offset="1" stop-color="#123a80"/></radialGradient></defs><circle cx="8" cy="8" r="7.5" fill="url(#mg)"/><path d="M4 5 Q5.5 11 12 12" fill="none" stroke="#e0ecff" stroke-width="1.1"/><path d="M6 3.5 Q7.5 8.5 12.5 9" fill="none" stroke="#c0d8f8" stroke-width="0.8"/></svg></div></div><div style="position:absolute;left:24.1px;top:533.39px;width:112.57px;height:1.2px;background:#e2e2e2;"></div><div style="position:absolute;left:24.1px;top:534.59px;width:112.57px;height:1px;background:#fafafa;"></div><div style="position:absolute;left:22.6px;top:533.99px;width:114.07px;height:20px;"><div style="position:absolute;left:23.76px;top:2.99px;font-size:11.8px;line-height:12px;white-space:nowrap;transform:scaleX(0.92);transform-origin:0 0;color:#151515">Exit</div><div style="position:absolute;left:3.89px;top:1.5px;width:16px;height:16px;"><svg width="16" height="16" viewBox="0 0 16 16" style="display:block"><rect x="1.5" y="0.5" width="10" height="15" fill="#b8662a" stroke="#8a4a1a" stroke-width="1"/><rect x="3.5" y="2.5" width="6" height="11" fill="#c87a3a"/><path d="M5 12 H13 V10 L16 12.5 L13 15 V13.5 H5 Z" fill="#3aa0e8"/></svg></div></div><div style="position:absolute;left:24.1px;top:553.39px;width:112.57px;height:1.2px;background:#e2e2e2;"></div><div style="position:absolute;left:24.1px;top:554.59px;width:112.57px;height:1px;background:#fafafa;"></div><div style="position:absolute;left:137.2px;top:71.8px;width:1142.8px;height:912.2px;background:#f0f0f0;"></div><div style="position:absolute;left:137.2px;top:71.8px;width:1142.8px;height:22.39px;background:#4b4bc9;"></div><div style="position:absolute;left:144.34px;top:79.73px;font-size:12.2px;line-height:12.2px;white-space:nowrap;transform:scaleX(0.9);transform-origin:0 0;color:#f6f6ff;">Firewall</div><div style="position:absolute;left:1244.22px;top:77.48px;width:14.51px;height:14.51px;background:#ececec;border:1px solid #8a8a8a;"><div style="position:absolute;left:3px;top:3px;width:8px;height:8px;border:1px solid #555;border-top-width:2px"></div><div style="position:absolute;left:5px;top:6px;width:4px;height:3px;border:1px solid #555;"></div></div><div style="position:absolute;left:1261.35px;top:77.48px;width:14.4px;height:14.51px;background:#ececec;border:1px solid #8a8a8a;"><svg style="position:absolute;left:2.5px;top:2.5px" width="9" height="9" viewBox="0 0 9 9"><path d="M1 1 L8 8 M8 1 L1 8" stroke="#222" stroke-width="1.8"/></svg></div><div style="position:absolute;left:137.2px;top:94.2px;width:1.05px;height:887.72px;background:#b8b8b8;"></div><div style="position:absolute;left:139.3px;top:94.2px;width:1.05px;height:887.72px;background:#c4c4c4;"></div><div style="position:absolute;left:1275.97px;top:94.2px;width:1.05px;height:887.72px;background:#b8b8b8;"></div><div style="position:absolute;left:1278.07px;top:94.2px;width:1.05px;height:887.72px;background:#c4c4c4;"></div><div style="position:absolute;left:1279.12px;top:94.2px;width:2.42px;height:889.82px;background:#fff;"></div><div style="position:absolute;left:137.2px;top:980.66px;width:1141.72px;height:1.05px;background:#bdbdbd;"></div><div style="position:absolute;left:137.2px;top:981.71px;width:1144.34px;height:2.31px;background:#fff;"></div><div style="position:absolute;left:144.66px;top:100.93px;width:64.02px;height:20.71px;background:#dcdcdc;border-right:1px solid #d2d2d2;"></div><div style="position:absolute;left:144.66px;width:64.02px;top:106.87px;text-align:center;font-size:11.8px;line-height:12px;white-space:nowrap;color:#151515"><span style="display:inline-block;transform:scaleX(0.92)">Filter Rules</span></div><div style="position:absolute;left:210.05px;top:100.93px;width:34.38px;height:20.71px;background:#dcdcdc;border-right:1px solid #d2d2d2;"></div><div style="position:absolute;left:210.05px;width:34.38px;top:106.87px;text-align:center;font-size:11.8px;line-height:12px;white-space:nowrap;color:#151515"><span style="display:inline-block;transform:scaleX(0.92)">NAT</span></div><div style="position:absolute;left:246.11px;top:100.93px;width:48.36px;height:20.71px;background:#dcdcdc;border-right:1px solid #d2d2d2;"></div><div style="position:absolute;left:246.11px;width:48.36px;top:106.87px;text-align:center;font-size:11.8px;line-height:12px;white-space:nowrap;color:#151515"><span style="display:inline-block;transform:scaleX(0.92)">Mangle</span></div><div style="position:absolute;left:295.94px;top:100.93px;width:74.22px;height:20.71px;background:#dcdcdc;border-right:1px solid #d2d2d2;"></div><div style="position:absolute;left:295.94px;width:74.22px;top:106.87px;text-align:center;font-size:11.8px;line-height:12px;white-space:nowrap;color:#151515"><span style="display:inline-block;transform:scaleX(0.92)">Service Ports</span></div><div style="position:absolute;left:445.23px;top:100.93px;width:75.17px;height:20.71px;background:#dcdcdc;border-right:1px solid #d2d2d2;"></div><div style="position:absolute;left:445.23px;width:75.17px;top:106.87px;text-align:center;font-size:11.8px;line-height:12px;white-space:nowrap;color:#151515"><span style="display:inline-block;transform:scaleX(0.92)">Address Lists</span></div><div style="position:absolute;left:521.55px;top:100.93px;width:91.36px;height:20.71px;background:#dcdcdc;border-right:1px solid #d2d2d2;"></div><div style="position:absolute;left:521.55px;width:91.36px;top:106.87px;text-align:center;font-size:11.8px;line-height:12px;white-space:nowrap;color:#151515"><span style="display:inline-block;transform:scaleX(0.92)">Layer7 Protocols</span></div><div style="position:absolute;left:370.16px;top:97.56px;width:74.75px;height:24.92px;background:#f0f0f0;border-left:1px solid #d6d6d6;border-right:1px solid #c8c8c8;border-top:1px solid #e8e8e8;"></div><div style="position:absolute;left:370.16px;width:74.75px;top:104.56px;text-align:center;font-size:11.8px;line-height:12px;white-space:nowrap;color:#151515"><span style="display:inline-block;transform:scaleX(0.92)">Connections</span></div><div style="position:absolute;left:139.82px;top:121.95px;width:1135.93px;height:1.05px;background:#fff;"></div><div style="position:absolute;left:142.45px;top:126.16px;width:22.08px;height:22.6px;border:1px solid #adadad;background:#efefef;"><div style="position:absolute;left:5px;top:8.5px;width:12px;height:4px;background:#8c1010;"></div></div><div style="position:absolute;left:172.94px;top:126.16px;width:21.55px;height:22.6px;border:1px solid #adadad;background:#efefef;"><svg style="position:absolute;left:3px;top:4px" width="14" height="14" viewBox="0 0 14 14"><path d="M1 1.5 H13 L8.5 6.5 V12.5 H5.5 V6.5 Z" fill="#9fb4e6" stroke="#111" stroke-width="1.3"/></svg></div><div style="position:absolute;left:202.38px;top:126.16px;width:58.87px;height:22.6px;border:1px solid #adadad;background:#efefef;"></div><div style="position:absolute;left:212.26px;top:132.38px;font-size:11.6px;line-height:11.6px;white-space:nowrap;transform:scaleX(0.92);transform-origin:0 0;color:#151515;">Tracking</div><div style="position:absolute;left:1214.05px;top:129.52px;width:59.61px;height:16.08px;border:1px solid #c5c5c5;background:#fff;"><div style="position:absolute;left:2px;top:0;font-size:12px;line-height:15px;font-style:italic;color:#a8a8a8;transform:scaleX(0.95);transform-origin:0 0">Find</div></div><div style="position:absolute;left:142.45px;top:151.81px;width:1132.25px;height:806.77px;background:#fff;"></div><div style="position:absolute;left:142.45px;top:151.81px;width:1132.25px;height:18.29px;background:#f0f0f0;"></div><div style="position:absolute;left:142.45px;top:170.1px;width:1132.25px;height:787.48px;overflow:hidden"><div class="r" style="top:0px;"><div class="c" style="left:2.84px">Cs</div><div class="c" style="left:55.3px">10.36.17.24:277</div><div class="c" style="left:299.62px">185.214.78.55:8080</div><div class="c cr" style="right:630.47px">6 (tcp)</div><div class="c cr" style="right:511.14px">00:00:00</div><div class="c" style="left:625.53px">syn sent</div><div class="c" style="left:730.66px">0 bps/0 bps</div><div class="c" style="left:850.82px">40 B/0 B</div></div><div class="r" style="top:15px;"><div class="c" style="left:2.84px">Cs</div><div class="c" style="left:55.3px">10.36.17.24:281</div><div class="c" style="left:299.62px">126.186.103.167:8080</div><div class="c cr" style="right:630.47px">6 (tcp)</div><div class="c cr" style="right:511.14px">00:00:00</div><div class="c" style="left:625.53px">syn sent</div><div class="c" style="left:730.66px">0 bps/0 bps</div><div class="c" style="left:850.82px">40 B/0 B</div></div><div class="r" style="top:30px;"><div class="c" style="left:2.84px">Cs</div><div class="c" style="left:55.3px">10.36.17.24:472</div><div class="c" style="left:299.62px">91.219.92.9:23</div><div class="c cr" style="right:630.47px">6 (tcp)</div><div class="c cr" style="right:511.14px">00:00:01</div><div class="c" style="left:625.53px">syn sent</div><div class="c" style="left:730.66px">0 bps/0 bps</div><div class="c" style="left:850.82px">40 B/0 B</div></div><div class="r" style="top:45px;"><div class="c" style="left:2.84px">Cs</div><div class="c" style="left:55.3px">10.36.17.24:600</div><div class="c" style="left:299.62px">91.219.108.236:7547</div><div class="c cr" style="right:630.47px">6 (tcp)</div><div class="c cr" style="right:511.14px">00:00:00</div><div class="c" style="left:625.53px">syn sent</div><div class="c" style="left:730.66px">0 bps/0 bps</div><div class="c" style="left:850.82px">40 B/0 B</div></div><div class="r" style="top:60px;"><div class="c" style="left:2.84px">Cs</div><div class="c" style="left:55.3px">10.36.17.24:665</div><div class="c" style="left:299.62px">54.132.56.123:23</div><div class="c cr" style="right:630.47px">6 (tcp)</div><div class="c cr" style="right:511.14px">00:00:01</div><div class="c" style="left:625.53px">syn sent</div><div class="c" style="left:730.66px">0 bps/0 bps</div><div class="c" style="left:850.82px">40 B/0 B</div></div><div class="r" style="top:75px;"><div class="c" style="left:2.84px">Cs</div><div class="c" style="left:55.3px">10.36.17.24:676</div><div class="c" style="left:299.62px">91.219.98.129:23</div><div class="c cr" style="right:630.47px">6 (tcp)</div><div class="c cr" style="right:511.14px">00:00:00</div><div class="c" style="left:625.53px">syn sent</div><div class="c" style="left:730.66px">0 bps/0 bps</div><div class="c" style="left:850.82px">40 B/0 B</div></div><div class="r" style="top:90px;"><div class="c" style="left:2.84px">Cs</div><div class="c" style="left:55.3px">10.36.17.24:913</div><div class="c" style="left:299.62px">191.37.63.112:8080</div><div class="c cr" style="right:630.47px">6 (tcp)</div><div class="c cr" style="right:511.14px">00:00:02</div><div class="c" style="left:625.53px">syn sent</div><div class="c" style="left:730.66px">0 bps/0 bps</div><div class="c" style="left:850.82px">40 B/0 B</div></div><div class="r" style="top:105px;"><div class="c" style="left:2.84px">Cs</div><div class="c" style="left:55.3px">10.36.17.24:938</div><div class="c" style="left:299.62px">91.219.201.200:7547</div><div class="c cr" style="right:630.47px">6 (tcp)</div><div class="c cr" style="right:511.14px">00:00:01</div><div class="c" style="left:625.53px">syn sent</div><div class="c" style="left:730.66px">0 bps/0 bps</div><div class="c" style="left:850.82px">40 B/0 B</div></div><div class="r" style="top:120px;"><div class="c" style="left:2.84px">Cs</div><div class="c" style="left:55.3px">10.36.17.24:1147</div><div class="c" style="left:299.62px">91.219.228.242:23</div><div class="c cr" style="right:630.47px">6 (tcp)</div><div class="c cr" style="right:511.14px">00:00:01</div><div class="c" style="left:625.53px">syn sent</div><div class="c" style="left:730.66px">0 bps/0 bps</div><div class="c" style="left:850.82px">40 B/0 B</div></div><div class="r" style="top:135px;"><div class="c" style="left:2.84px">Cs</div><div class="c" style="left:55.3px">10.36.17.24:1260</div><div class="c" style="left:299.62px">91.219.216.28:7547</div><div class="c cr" style="right:630.47px">6 (tcp)</div><div class="c cr" style="right:511.14px">00:00:03</div><div class="c" style="left:625.53px">syn sent</div><div class="c" style="left:730.66px">0 bps/0 bps</div><div class="c" style="left:850.82px">40 B/0 B</div></div><div class="r" style="top:150px;"><div class="c" style="left:2.84px">Cs</div><div class="c" style="left:55.3px">10.36.17.24:1371</div><div class="c" style="left:299.62px">91.219.116.109:8291</div><div class="c cr" style="right:630.47px">6 (tcp)</div><div class="c cr" style="right:511.14px">00:00:04</div><div class="c" style="left:625.53px">syn sent</div><div class="c" style="left:730.66px">0 bps/0 bps</div><div class="c" style="left:850.82px">40 B/0 B</div></div><div class="r" style="top:165px;"><div class="c" style="left:2.84px">Cs</div><div class="c" style="left:55.3px">10.36.17.24:1420</div><div class="c" style="left:299.62px">91.219.116.77:8291</div><div class="c cr" style="right:630.47px">6 (tcp)</div><div class="c cr" style="right:511.14px">00:00:02</div><div class="c" style="left:625.53px">syn sent</div><div class="c" style="left:730.66px">0 bps/0 bps</div><div class="c" style="left:850.82px">40 B/0 B</div></div><div class="r" style="top:180px;"><div class="c" style="left:2.84px">Cs</div><div class="c" style="left:55.3px">10.36.17.24:1700</div><div class="c" style="left:299.62px">91.219.148.125:23</div><div class="c cr" style="right:630.47px">6 (tcp)</div><div class="c cr" style="right:511.14px">00:00:04</div><div class="c" style="left:625.53px">syn sent</div><div class="c" style="left:730.66px">0 bps/0 bps</div><div class="c" style="left:850.82px">40 B/0 B</div></div><div class="r" style="top:195px;"><div class="c" style="left:2.84px">Cs</div><div class="c" style="left:55.3px">10.36.17.24:1886</div><div class="c" style="left:299.62px">91.219.42.169:23</div><div class="c cr" style="right:630.47px">6 (tcp)</div><div class="c cr" style="right:511.14px">00:00:01</div><div class="c" style="left:625.53px">syn sent</div><div class="c" style="left:730.66px">0 bps/0 bps</div><div class="c" style="left:850.82px">40 B/0 B</div></div><div class="r" style="top:210px;"><div class="c" style="left:2.84px">Cs</div><div class="c" style="left:55.3px">10.36.17.24:1896</div><div class="c" style="left:299.62px">91.219.39.30:23</div><div class="c cr" style="right:630.47px">6 (tcp)</div><div class="c cr" style="right:511.14px">00:00:04</div><div class="c" style="left:625.53px">syn sent</div><div class="c" style="left:730.66px">0 bps/0 bps</div><div class="c" style="left:850.82px">40 B/0 B</div></div><div class="r" style="top:225px;"><div class="c" style="left:2.84px">Cs</div><div class="c" style="left:55.3px">10.36.17.24:2032</div><div class="c" style="left:299.62px">91.219.237.250:7547</div><div class="c cr" style="right:630.47px">6 (tcp)</div><div class="c cr" style="right:511.14px">00:00:02</div><div class="c" style="left:625.53px">syn sent</div><div class="c" style="left:730.66px">0 bps/0 bps</div><div class="c" style="left:850.82px">40 B/0 B</div></div><div class="r" style="top:240px;"><div class="c" style="left:2.84px">Cs</div><div class="c" style="left:55.3px">10.36.17.24:2101</div><div class="c" style="left:299.62px">36.6.196.65:80</div><div class="c cr" style="right:630.47px">6 (tcp)</div><div class="c cr" style="right:511.14px">00:00:00</div><div class="c" style="left:625.53px">syn sent</div><div class="c" style="left:730.66px">0 bps/0 bps</div><div class="c" style="left:850.82px">40 B/0 B</div></div><div class="r" style="top:255px;"><div class="c" style="left:2.84px">Cs</div><div class="c" style="left:55.3px">10.36.17.24:2102</div><div class="c" style="left:299.62px">38.109.200.50:80</div><div class="c cr" style="right:630.47px">6 (tcp)</div><div class="c cr" style="right:511.14px">00:00:02</div><div class="c" style="left:625.53px">syn sent</div><div class="c" style="left:730.66px">0 bps/0 bps</div><div class="c" style="left:850.82px">40 B/0 B</div></div><div class="r" style="top:270px;"><div class="c" style="left:2.84px">Cs</div><div class="c" style="left:55.3px">10.36.17.24:2120</div><div class="c" style="left:299.62px">91.219.16.105:23</div><div class="c cr" style="right:630.47px">6 (tcp)</div><div class="c cr" style="right:511.14px">00:00:00</div><div class="c" style="left:625.53px">syn sent</div><div class="c" style="left:730.66px">0 bps/0 bps</div><div class="c" style="left:850.82px">40 B/0 B</div></div><div class="r" style="top:285px;"><div class="c" style="left:2.84px">Cs</div><div class="c" style="left:55.3px">10.36.17.24:2127</div><div class="c" style="left:299.62px">91.219.237.202:8291</div><div class="c cr" style="right:630.47px">6 (tcp)</div><div class="c cr" style="right:511.14px">00:00:00</div><div class="c" style="left:625.53px">syn sent</div><div class="c" style="left:730.66px">0 bps/0 bps</div><div class="c" style="left:850.82px">40 B/0 B</div></div><div class="r" style="top:300px;"><div class="c" style="left:2.84px">Cs</div><div class="c" style="left:55.3px">10.36.17.24:2153</div><div class="c" style="left:299.62px">13.193.73.204:80</div><div class="c cr" style="right:630.47px">6 (tcp)</div><div class="c cr" style="right:511.14px">00:00:04</div><div class="c" style="left:625.53px">syn sent</div><div class="c" style="left:730.66px">0 bps/0 bps</div><div class="c" style="left:850.82px">40 B/0 B</div></div><div class="r" style="top:315px;"><div class="c" style="left:2.84px">Cs</div><div class="c" style="left:55.3px">10.36.17.24:2269</div><div class="c" style="left:299.62px">160.74.114.7:80</div><div class="c cr" style="right:630.47px">6 (tcp)</div><div class="c cr" style="right:511.14px">00:00:03</div><div class="c" style="left:625.53px">syn sent</div><div class="c" style="left:730.66px">0 bps/0 bps</div><div class="c" style="left:850.82px">40 B/0 B</div></div><div class="r" style="top:330px;"><div class="c" style="left:2.84px">Cs</div><div class="c" style="left:55.3px">10.36.17.24:2341</div><div class="c" style="left:299.62px">92.208.0.118:8080</div><div class="c cr" style="right:630.47px">6 (tcp)</div><div class="c cr" style="right:511.14px">00:00:01</div><div class="c" style="left:625.53px">syn sent</div><div class="c" style="left:730.66px">0 bps/0 bps</div><div class="c" style="left:850.82px">40 B/0 B</div></div><div class="r" style="top:345px;"><div class="c" style="left:2.84px">Cs</div><div class="c" style="left:55.3px">10.36.17.24:2396</div><div class="c" style="left:299.62px">91.219.213.125:7547</div><div class="c cr" style="right:630.47px">6 (tcp)</div><div class="c cr" style="right:511.14px">00:00:03</div><div class="c" style="left:625.53px">syn sent</div><div class="c" style="left:730.66px">0 bps/0 bps</div><div class="c" style="left:850.82px">40 B/0 B</div></div><div class="r" style="top:360px;"><div class="c" style="left:2.84px">Cs</div><div class="c" style="left:55.3px">10.36.17.24:2421</div><div class="c" style="left:299.62px">91.219.135.119:23</div><div class="c cr" style="right:630.47px">6 (tcp)</div><div class="c cr" style="right:511.14px">00:00:02</div><div class="c" style="left:625.53px">syn sent</div><div class="c" style="left:730.66px">0 bps/0 bps</div><div class="c" style="left:850.82px">40 B/0 B</div></div><div class="r" style="top:375px;"><div class="c" style="left:2.84px">Cs</div><div class="c" style="left:55.3px">10.36.17.24:2484</div><div class="c" style="left:299.62px">91.219.254.218:23</div><div class="c cr" style="right:630.47px">6 (tcp)</div><div class="c cr" style="right:511.14px">00:00:00</div><div class="c" style="left:625.53px">syn sent</div><div class="c" style="left:730.66px">0 bps/0 bps</div><div class="c" style="left:850.82px">40 B/0 B</div></div><div class="r" style="top:390px;"><div class="c" style="left:2.84px">Cs</div><div class="c" style="left:55.3px">10.36.17.24:2537</div><div class="c" style="left:299.62px">201.109.196.154:8080</div><div class="c cr" style="right:630.47px">6 (tcp)</div><div class="c cr" style="right:511.14px">00:00:01</div><div class="c" style="left:625.53px">syn sent</div><div class="c" style="left:730.66px">0 bps/0 bps</div><div class="c" style="left:850.82px">40 B/0 B</div></div><div class="r" style="top:405px;"><div class="c" style="left:2.84px">Cs</div><div class="c" style="left:55.3px">10.36.17.24:2565</div><div class="c" style="left:299.62px">200.0.93.152:8080</div><div class="c cr" style="right:630.47px">6 (tcp)</div><div class="c cr" style="right:511.14px">00:00:04</div><div class="c" style="left:625.53px">syn sent</div><div class="c" style="left:730.66px">0 bps/0 bps</div><div class="c" style="left:850.82px">40 B/0 B</div></div><div class="r" style="top:420px;"><div class="c" style="left:2.84px">CFs</div><div class="c" style="left:55.3px">10.36.17.24:2731</div><div class="c" style="left:299.62px">135.168.240.157:8080</div><div class="c cr" style="right:630.47px">6 (tcp)</div><div class="c cr" style="right:511.14px">00:00:03</div><div class="c" style="left:625.53px">syn sent</div><div class="c" style="left:730.66px">0 bps/0 bps</div><div class="c" style="left:850.82px">40 B/0 B</div></div><div class="r" style="top:435px;"><div class="c" style="left:2.84px">Cs</div><div class="c" style="left:55.3px">10.36.17.24:2736</div><div class="c" style="left:299.62px">47.109.16.195:23</div><div class="c cr" style="right:630.47px">6 (tcp)</div><div class="c cr" style="right:511.14px">00:00:03</div><div class="c" style="left:625.53px">syn sent</div><div class="c" style="left:730.66px">0 bps/0 bps</div><div class="c" style="left:850.82px">40 B/0 B</div></div><div class="r" style="top:450px;"><div class="c" style="left:2.84px">Cs</div><div class="c" style="left:55.3px">10.36.17.24:2744</div><div class="c" style="left:299.62px">91.219.73.253:23</div><div class="c cr" style="right:630.47px">6 (tcp)</div><div class="c cr" style="right:511.14px">00:00:04</div><div class="c" style="left:625.53px">syn sent</div><div class="c" style="left:730.66px">0 bps/0 bps</div><div class="c" style="left:850.82px">40 B/0 B</div></div><div class="r" style="top:465px;"><div class="c" style="left:2.84px">Cs</div><div class="c" style="left:55.3px">10.36.17.24:2864</div><div class="c" style="left:299.62px">91.219.217.69:7547</div><div class="c cr" style="right:630.47px">6 (tcp)</div><div class="c cr" style="right:511.14px">00:00:00</div><div class="c" style="left:625.53px">syn sent</div><div class="c" style="left:730.66px">0 bps/0 bps</div><div class="c" style="left:850.82px">40 B/0 B</div></div><div class="r" style="top:480px;"><div class="c" style="left:2.84px">Cs</div><div class="c" style="left:55.3px">10.36.17.24:3036</div><div class="c" style="left:299.62px">74.117.110.198:23</div><div class="c cr" style="right:630.47px">6 (tcp)</div><div class="c cr" style="right:511.14px">00:00:03</div><div class="c" style="left:625.53px">syn sent</div><div class="c" style="left:730.66px">0 bps/0 bps</div><div class="c" style="left:850.82px">40 B/0 B</div></div><div class="r" style="top:495px;"><div class="c" style="left:2.84px">Cs</div><div class="c" style="left:55.3px">10.36.17.24:3101</div><div class="c" style="left:299.62px">91.219.156.247:23</div><div class="c cr" style="right:630.47px">6 (tcp)</div><div class="c cr" style="right:511.14px">00:00:02</div><div class="c" style="left:625.53px">syn sent</div><div class="c" style="left:730.66px">0 bps/0 bps</div><div class="c" style="left:850.82px">40 B/0 B</div></div><div class="r" style="top:510px;"><div class="c" style="left:2.84px">Cs</div><div class="c" style="left:55.3px">10.36.17.24:3105</div><div class="c" style="left:299.62px">91.219.102.24:23</div><div class="c cr" style="right:630.47px">6 (tcp)</div><div class="c cr" style="right:511.14px">00:00:02</div><div class="c" style="left:625.53px">syn sent</div><div class="c" style="left:730.66px">0 bps/0 bps</div><div class="c" style="left:850.82px">40 B/0 B</div></div><div class="r" style="top:525px;"><div class="c" style="left:2.84px">Cs</div><div class="c" style="left:55.3px">10.36.17.24:3157</div><div class="c" style="left:299.62px">182.253.168.74:23</div><div class="c cr" style="right:630.47px">6 (tcp)</div><div class="c cr" style="right:511.14px">00:00:03</div><div class="c" style="left:625.53px">syn sent</div><div class="c" style="left:730.66px">0 bps/0 bps</div><div class="c" style="left:850.82px">40 B/0 B</div></div><div class="r" style="top:540px;"><div class="c" style="left:2.84px">Cs</div><div class="c" style="left:55.3px">10.36.17.24:3207</div><div class="c" style="left:299.62px">91.219.176.240:7547</div><div class="c cr" style="right:630.47px">6 (tcp)</div><div class="c cr" style="right:511.14px">00:00:03</div><div class="c" style="left:625.53px">syn sent</div><div class="c" style="left:730.66px">0 bps/0 bps</div><div class="c" style="left:850.82px">40 B/0 B</div></div><div class="r" style="top:555px;"><div class="c" style="left:2.84px">Cs</div><div class="c" style="left:55.3px">10.36.17.24:3260</div><div class="c" style="left:299.62px">91.219.236.31:8291</div><div class="c cr" style="right:630.47px">6 (tcp)</div><div class="c cr" style="right:511.14px">00:00:02</div><div class="c" style="left:625.53px">syn sent</div><div class="c" style="left:730.66px">0 bps/0 bps</div><div class="c" style="left:850.82px">40 B/0 B</div></div><div class="r" style="top:570px;"><div class="c" style="left:2.84px">Cs</div><div class="c" style="left:55.3px">10.36.17.24:3368</div><div class="c" style="left:299.62px">91.219.122.187:23</div><div class="c cr" style="right:630.47px">6 (tcp)</div><div class="c cr" style="right:511.14px">00:00:03</div><div class="c" style="left:625.53px">syn sent</div><div class="c" style="left:730.66px">0 bps/0 bps</div><div class="c" style="left:850.82px">40 B/0 B</div></div><div class="r" style="top:585px;"><div class="c" style="left:2.84px">Cs</div><div class="c" style="left:55.3px">10.36.17.24:3402</div><div class="c" style="left:299.62px">91.219.93.255:23</div><div class="c cr" style="right:630.47px">6 (tcp)</div><div class="c cr" style="right:511.14px">00:00:02</div><div class="c" style="left:625.53px">syn sent</div><div class="c" style="left:730.66px">0 bps/0 bps</div><div class="c" style="left:850.82px">40 B/0 B</div></div><div class="r" style="top:600px;"><div class="c" style="left:2.84px">Cs</div><div class="c" style="left:55.3px">10.36.17.24:3444</div><div class="c" style="left:299.62px">110.247.170.54:23</div><div class="c cr" style="right:630.47px">6 (tcp)</div><div class="c cr" style="right:511.14px">00:00:01</div><div class="c" style="left:625.53px">syn sent</div><div class="c" style="left:730.66px">0 bps/0 bps</div><div class="c" style="left:850.82px">40 B/0 B</div></div><div class="r" style="top:615px;"><div class="c" style="left:2.84px">Cs</div><div class="c" style="left:55.3px">10.36.17.24:3706</div><div class="c" style="left:299.62px">91.219.166.244:7547</div><div class="c cr" style="right:630.47px">6 (tcp)</div><div class="c cr" style="right:511.14px">00:00:04</div><div class="c" style="left:625.53px">syn sent</div><div class="c" style="left:730.66px">0 bps/0 bps</div><div class="c" style="left:850.82px">40 B/0 B</div></div><div class="r" style="top:630px;"><div class="c" style="left:2.84px">CFs</div><div class="c" style="left:55.3px">10.36.17.24:3736</div><div class="c" style="left:299.62px">103.168.112.125:80</div><div class="c cr" style="right:630.47px">6 (tcp)</div><div class="c cr" style="right:511.14px">00:00:04</div><div class="c" style="left:625.53px">syn sent</div><div class="c" style="left:730.66px">0 bps/0 bps</div><div class="c" style="left:850.82px">40 B/0 B</div></div><div class="r" style="top:645px;"><div class="c" style="left:2.84px">Cs</div><div class="c" style="left:55.3px">10.36.17.24:3921</div><div class="c" style="left:299.62px">91.219.101.106:7547</div><div class="c cr" style="right:630.47px">6 (tcp)</div><div class="c cr" style="right:511.14px">00:00:01</div><div class="c" style="left:625.53px">syn sent</div><div class="c" style="left:730.66px">0 bps/0 bps</div><div class="c" style="left:850.82px">40 B/0 B</div></div><div class="r" style="top:660px;"><div class="c" style="left:2.84px">Cs</div><div class="c" style="left:55.3px">10.36.17.24:4143</div><div class="c" style="left:299.62px">91.219.171.90:7547</div><div class="c cr" style="right:630.47px">6 (tcp)</div><div class="c cr" style="right:511.14px">00:00:04</div><div class="c" style="left:625.53px">syn sent</div><div class="c" style="left:730.66px">0 bps/0 bps</div><div class="c" style="left:850.82px">40 B/0 B</div></div><div class="r" style="top:675px;"><div class="c" style="left:2.84px">Cs</div><div class="c" style="left:55.3px">10.36.17.24:4197</div><div class="c" style="left:299.62px">143.194.126.50:23</div><div class="c cr" style="right:630.47px">6 (tcp)</div><div class="c cr" style="right:511.14px">00:00:01</div><div class="c" style="left:625.53px">syn sent</div><div class="c" style="left:730.66px">0 bps/0 bps</div><div class="c" style="left:850.82px">40 B/0 B</div></div><div class="r" style="top:690px;"><div class="c" style="left:2.84px">Cs</div><div class="c" style="left:55.3px">10.36.17.24:4206</div><div class="c" style="left:299.62px">91.219.103.27:8291</div><div class="c cr" style="right:630.47px">6 (tcp)</div><div class="c cr" style="right:511.14px">00:00:03</div><div class="c" style="left:625.53px">syn sent</div><div class="c" style="left:730.66px">0 bps/0 bps</div><div class="c" style="left:850.82px">40 B/0 B</div></div><div class="r" style="top:705px;"><div class="c" style="left:2.84px">Cs</div><div class="c" style="left:55.3px">10.36.17.24:4388</div><div class="c" style="left:299.62px">27.25.140.54:8080</div><div class="c cr" style="right:630.47px">6 (tcp)</div><div class="c cr" style="right:511.14px">00:00:04</div><div class="c" style="left:625.53px">syn sent</div><div class="c" style="left:730.66px">0 bps/0 bps</div><div class="c" style="left:850.82px">40 B/0 B</div></div><div class="r" style="top:720px;"><div class="c" style="left:2.84px">Cs</div><div class="c" style="left:55.3px">10.36.17.24:4431</div><div class="c" style="left:299.62px">91.219.129.202:7547</div><div class="c cr" style="right:630.47px">6 (tcp)</div><div class="c cr" style="right:511.14px">00:00:04</div><div class="c" style="left:625.53px">syn sent</div><div class="c" style="left:730.66px">0 bps/0 bps</div><div class="c" style="left:850.82px">40 B/0 B</div></div><div class="r" style="top:735px;"><div class="c" style="left:2.84px">Cs</div><div class="c" style="left:55.3px">10.36.17.24:4568</div><div class="c" style="left:299.62px">91.219.49.17:7547</div><div class="c cr" style="right:630.47px">6 (tcp)</div><div class="c cr" style="right:511.14px">00:00:04</div><div class="c" style="left:625.53px">syn sent</div><div class="c" style="left:730.66px">0 bps/0 bps</div><div class="c" style="left:850.82px">40 B/0 B</div></div><div class="r" style="top:750px;"><div class="c" style="left:2.84px">Cs</div><div class="c" style="left:55.3px">10.36.17.24:4693</div><div class="c" style="left:299.62px">49.101.161.101:8080</div><div class="c cr" style="right:630.47px">6 (tcp)</div><div class="c cr" style="right:511.14px">00:00:03</div><div class="c" style="left:625.53px">syn sent</div><div class="c" style="left:730.66px">0 bps/0 bps</div><div class="c" style="left:850.82px">40 B/0 B</div></div><div class="r" style="top:765px;"><div class="c" style="left:2.84px">Cs</div><div class="c" style="left:55.3px">10.36.17.24:4701</div><div class="c" style="left:299.62px">195.153.8.249:80</div><div class="c cr" style="right:630.47px">6 (tcp)</div><div class="c cr" style="right:511.14px">00:00:00</div><div class="c" style="left:625.53px">syn sent</div><div class="c" style="left:730.66px">0 bps/0 bps</div><div class="c" style="left:850.82px">40 B/0 B</div></div><div class="r" style="top:780px;"><div class="c" style="left:2.84px">Cs</div><div class="c" style="left:55.3px">10.36.17.24:4718</div><div class="c" style="left:299.62px">91.219.199.184:7547</div><div class="c cr" style="right:630.47px">6 (tcp)</div><div class="c cr" style="right:511.14px">00:00:00</div><div class="c" style="left:625.53px">syn sent</div><div class="c" style="left:730.66px">0 bps/0 bps</div><div class="c" style="left:850.82px">40 B/0 B</div></div><div style="position:absolute;left:0;top:14.2px;width:1116.8px;height:1px;background:#e2e2e2"></div><div style="position:absolute;left:0;top:29.2px;width:1116.8px;height:1px;background:#e2e2e2"></div><div style="position:absolute;left:0;top:44.2px;width:1116.8px;height:1px;background:#e2e2e2"></div><div style="position:absolute;left:0;top:59.2px;width:1116.8px;height:1px;background:#e2e2e2"></div><div style="position:absolute;left:0;top:74.2px;width:1116.8px;height:1px;background:#e2e2e2"></div><div style="position:absolute;left:0;top:89.2px;width:1116.8px;height:1px;background:#e2e2e2"></div><div style="position:absolute;left:0;top:104.2px;width:1116.8px;height:1px;background:#e2e2e2"></div><div style="position:absolute;left:0;top:119.2px;width:1116.8px;height:1px;background:#e2e2e2"></div><div style="position:absolute;left:0;top:134.2px;width:1116.8px;height:1px;background:#e2e2e2"></div><div style="position:absolute;left:0;top:149.2px;width:1116.8px;height:1px;background:#e2e2e2"></div><div style="position:absolute;left:0;top:164.2px;width:1116.8px;height:1px;background:#e2e2e2"></div><div style="position:absolute;left:0;top:179.2px;width:1116.8px;height:1px;background:#e2e2e2"></div><div style="position:absolute;left:0;top:194.2px;width:1116.8px;height:1px;background:#e2e2e2"></div><div style="position:absolute;left:0;top:209.2px;width:1116.8px;height:1px;background:#e2e2e2"></div><div style="position:absolute;left:0;top:224.2px;width:1116.8px;height:1px;background:#e2e2e2"></div><div style="position:absolute;left:0;top:239.2px;width:1116.8px;height:1px;background:#e2e2e2"></div><div style="position:absolute;left:0;top:254.2px;width:1116.8px;height:1px;background:#e2e2e2"></div><div style="position:absolute;left:0;top:269.2px;width:1116.8px;height:1px;background:#e2e2e2"></div><div style="position:absolute;left:0;top:284.2px;width:1116.8px;height:1px;background:#e2e2e2"></div><div style="position:absolute;left:0;top:299.2px;width:1116.8px;height:1px;background:#e2e2e2"></div><div style="position:absolute;left:0;top:314.2px;width:1116.8px;height:1px;background:#e2e2e2"></div><div style="position:absolute;left:0;top:329.2px;width:1116.8px;height:1px;background:#e2e2e2"></div><div style="position:absolute;left:0;top:344.2px;width:1116.8px;height:1px;background:#e2e2e2"></div><div style="position:absolute;left:0;top:359.2px;width:1116.8px;height:1px;background:#e2e2e2"></div><div style="position:absolute;left:0;top:374.2px;width:1116.8px;height:1px;background:#e2e2e2"></div><div style="position:absolute;left:0;top:389.2px;width:1116.8px;height:1px;background:#e2e2e2"></div><div style="position:absolute;left:0;top:404.2px;width:1116.8px;height:1px;background:#e2e2e2"></div><div style="position:absolute;left:0;top:419.2px;width:1116.8px;height:1px;background:#e2e2e2"></div><div style="position:absolute;left:0;top:434.2px;width:1116.8px;height:1px;background:#e2e2e2"></div><div style="position:absolute;left:0;top:449.2px;width:1116.8px;height:1px;background:#e2e2e2"></div><div style="position:absolute;left:0;top:464.2px;width:1116.8px;height:1px;background:#e2e2e2"></div><div style="position:absolute;left:0;top:479.2px;width:1116.8px;height:1px;background:#e2e2e2"></div><div style="position:absolute;left:0;top:494.2px;width:1116.8px;height:1px;background:#e2e2e2"></div><div style="position:absolute;left:0;top:509.2px;width:1116.8px;height:1px;background:#e2e2e2"></div><div style="position:absolute;left:0;top:524.2px;width:1116.8px;height:1px;background:#e2e2e2"></div><div style="position:absolute;left:0;top:539.2px;width:1116.8px;height:1px;background:#e2e2e2"></div><div style="position:absolute;left:0;top:554.2px;width:1116.8px;height:1px;background:#e2e2e2"></div><div style="position:absolute;left:0;top:569.2px;width:1116.8px;height:1px;background:#e2e2e2"></div><div style="position:absolute;left:0;top:584.2px;width:1116.8px;height:1px;background:#e2e2e2"></div><div style="position:absolute;left:0;top:599.2px;width:1116.8px;height:1px;background:#e2e2e2"></div><div style="position:absolute;left:0;top:614.2px;width:1116.8px;height:1px;background:#e2e2e2"></div><div style="position:absolute;left:0;top:629.2px;width:1116.8px;height:1px;background:#e2e2e2"></div><div style="position:absolute;left:0;top:644.2px;width:1116.8px;height:1px;background:#e2e2e2"></div><div style="position:absolute;left:0;top:659.2px;width:1116.8px;height:1px;background:#e2e2e2"></div><div style="position:absolute;left:0;top:674.2px;width:1116.8px;height:1px;background:#e2e2e2"></div><div style="position:absolute;left:0;top:689.2px;width:1116.8px;height:1px;background:#e2e2e2"></div><div style="position:absolute;left:0;top:704.2px;width:1116.8px;height:1px;background:#e2e2e2"></div><div style="position:absolute;left:0;top:719.2px;width:1116.8px;height:1px;background:#e2e2e2"></div><div style="position:absolute;left:0;top:734.2px;width:1116.8px;height:1px;background:#e2e2e2"></div><div style="position:absolute;left:0;top:749.2px;width:1116.8px;height:1px;background:#e2e2e2"></div><div style="position:absolute;left:0;top:764.2px;width:1116.8px;height:1px;background:#e2e2e2"></div><div style="position:absolute;left:0;top:779.2px;width:1116.8px;height:1px;background:#e2e2e2"></div><div style="position:absolute;left:0;top:794.2px;width:1116.8px;height:1px;background:#e2e2e2"></div><div style="position:absolute;left:51.96px;top:0;width:1px;height:900px;background:#e8e8e8"></div><div style="position:absolute;left:297.33px;top:0;width:1px;height:900px;background:#e8e8e8"></div><div style="position:absolute;left:411.72px;top:0;width:1px;height:900px;background:#e8e8e8"></div><div style="position:absolute;left:503.39px;top:0;width:1px;height:900px;background:#e8e8e8"></div><div style="position:absolute;left:563px;top:0;width:1px;height:900px;background:#e8e8e8"></div><div style="position:absolute;left:623.13px;top:0;width:1px;height:900px;background:#e8e8e8"></div><div style="position:absolute;left:728.16px;top:0;width:1px;height:900px;background:#e8e8e8"></div><div style="position:absolute;left:848.32px;top:0;width:1px;height:900px;background:#e8e8e8"></div><div style="position:absolute;left:948.09px;top:0;width:1px;height:900px;background:#e8e8e8"></div><div style="position:absolute;left:1.26px;top:104.2px;width:1115.22px;height:15px;border:1px dotted #6a6a6a;box-sizing:border-box"></div></div><div style="position:absolute;left:142.45px;top:151.81px;width:1132.25px;height:1.05px;background:#c4c4c4;"></div><div style="position:absolute;left:142.45px;top:169.05px;width:1132.25px;height:1.05px;background:#b4b4b4;"></div><div style="position:absolute;left:194.39px;top:152.86px;width:1.05px;height:16.19px;background:#b0b0b0;"></div><div style="position:absolute;left:439.76px;top:152.86px;width:1.05px;height:16.19px;background:#b0b0b0;"></div><div style="position:absolute;left:554.14px;top:152.86px;width:1.05px;height:16.19px;background:#b0b0b0;"></div><div style="position:absolute;left:645.82px;top:152.86px;width:1.05px;height:16.19px;background:#b0b0b0;"></div><div style="position:absolute;left:705.42px;top:152.86px;width:1.05px;height:16.19px;background:#b0b0b0;"></div><div style="position:absolute;left:765.56px;top:152.86px;width:1.05px;height:16.19px;background:#b0b0b0;"></div><div style="position:absolute;left:870.58px;top:152.86px;width:1.05px;height:16.19px;background:#b0b0b0;"></div><div style="position:absolute;left:990.75px;top:152.86px;width:1.05px;height:16.19px;background:#b0b0b0;"></div><div style="position:absolute;left:1090.52px;top:152.86px;width:1.05px;height:16.19px;background:#b0b0b0;"></div><div style="position:absolute;left:1259.15px;top:152.86px;width:1.05px;height:16.19px;background:#b0b0b0;"></div><div style="position:absolute;left:197.65px;top:156.04px;font-size:11.6px;line-height:11.6px;white-space:nowrap;transform:scaleX(0.92);transform-origin:0 0;color:#151515;">Src. Address</div><div style="position:absolute;left:443.02px;top:156.04px;font-size:11.6px;line-height:11.6px;white-space:nowrap;transform:scaleX(0.92);transform-origin:0 0;color:#151515;">Dst. Address</div><div style="position:absolute;left:557.4px;top:156.04px;font-size:11.6px;line-height:11.6px;white-space:nowrap;transform:scaleX(0.92);transform-origin:0 0;color:#151515;">Protocol</div><div style="position:absolute;left:649.07px;top:156.04px;font-size:11.6px;line-height:11.6px;white-space:nowrap;transform:scaleX(0.92);transform-origin:0 0;color:#151515;">Conne...</div><div style="position:absolute;left:708.68px;top:156.04px;font-size:11.6px;line-height:11.6px;white-space:nowrap;transform:scaleX(0.92);transform-origin:0 0;color:#151515;">Timeout</div><div style="position:absolute;left:768.82px;top:156.04px;font-size:11.6px;line-height:11.6px;white-space:nowrap;transform:scaleX(0.92);transform-origin:0 0;color:#151515;">TCP State</div><div style="position:absolute;left:873.84px;top:156.04px;font-size:11.6px;line-height:11.6px;white-space:nowrap;transform:scaleX(0.92);transform-origin:0 0;color:#151515;">Orig./Repl. Rate</div><div style="position:absolute;left:994.01px;top:156.04px;font-size:11.6px;line-height:11.6px;white-space:nowrap;transform:scaleX(0.92);transform-origin:0 0;color:#151515;">Orig./Repl. Bytes</div><svg style="position:absolute;left:429.88px;top:156.96px" width="8" height="7" viewBox="0 0 8 7"><path d="M0.5 6.5 L4 0.5 L7.5 6.5 Z" fill="#f6f6f6" stroke="#d0d0d0" stroke-width="0.9"/><path d="M0.5 6.5 L4 0.5" stroke="#b8b8b8" stroke-width="1"/></svg><svg style="position:absolute;left:695.96px;top:156.96px" width="8" height="7" viewBox="0 0 8 7"><path d="M0.5 6.5 L4 0.5 L7.5 6.5 Z" fill="#f6f6f6" stroke="#d0d0d0" stroke-width="0.9"/><path d="M0.5 6.5 L4 0.5" stroke="#b8b8b8" stroke-width="1"/></svg><div style="position:absolute;left:1259.99px;top:152.86px;width:14.19px;height:16.19px;background:#f0f0f0;"><svg style="position:absolute;left:3px;top:5px" width="10" height="6" viewBox="0 0 10 6"><path d="M0 0 H10 L5 6 Z" fill="#111"/></svg></div><div style="position:absolute;left:142.45px;top:152.44px;width:1.05px;height:806.14px;background:#a8a8a8;"></div><div style="position:absolute;left:1273.65px;top:152.44px;width:1.05px;height:806.14px;background:#d0d0d0;"></div><div style="position:absolute;left:142.45px;top:957.53px;width:1132.25px;height:1.05px;background:#a8a8a8;"></div><div style="position:absolute;left:1259.04px;top:152.86px;width:1.05px;height:804.88px;background:#a8a8a8;"></div><div style="position:absolute;left:1260.09px;top:170.1px;width:13.56px;height:14.3px;background:#f0f0f0;border-bottom:1px solid #c8c8c8;"><svg style="position:absolute;left:3.5px;top:4px" width="8" height="7" viewBox="0 0 8 7"><path d="M4 0 L8 4 H5.5 V7 H2.5 V4 H0 Z" fill="#111"/></svg></div><div style="position:absolute;left:1260.09px;top:184.4px;width:13.56px;height:65.08px;background:#ececec;border-bottom:1px solid #c8c8c8;"></div><div style="position:absolute;left:1260.09px;top:249.47px;width:13.56px;height:693.86px;background:#d6d6d6;"></div><div style="position:absolute;left:1260.09px;top:943.33px;width:13.56px;height:14.4px;background:#f0f0f0;border-top:1px solid #c8c8c8;"><svg style="position:absolute;left:3.5px;top:3.5px" width="8" height="7" viewBox="0 0 8 7"><path d="M4 7 L8 3 H5.5 V0 H2.5 V3 H0 Z" fill="#111"/></svg></div><div style="position:absolute;left:142.45px;top:958.58px;width:1.05px;height:20.4px;background:#bdbdbd;"></div><div style="position:absolute;left:142.45px;top:977.92px;width:1133.31px;height:1.05px;background:#bdbdbd;"></div><div style="position:absolute;left:1274.71px;top:958.58px;width:1.05px;height:20.4px;background:#fcfcfc;"></div><div style="position:absolute;left:520.71px;top:960.37px;width:1.05px;height:17.35px;background:#c4c4c4;"></div><div style="position:absolute;left:146.13px;top:962.28px;font-size:11.6px;line-height:11.6px;white-space:nowrap;transform:scaleX(0.92);transform-origin:0 0;color:#151515;">596 items out of 506 (1 selected)</div><div style="position:absolute;left:523.97px;top:962.28px;font-size:11.6px;line-height:11.6px;white-space:nowrap;transform:scaleX(0.92);transform-origin:0 0;color:#151515;">Max Entries: 218040</div><div style="position:absolute;left:0px;top:984px;width:1280px;height:40px;background:#222120;"></div><svg style="position:absolute;left:14.09px;top:992.96px" width="22" height="22" viewBox="0 0 22 22"><path d="M0.5 3 L9.5 1.8 V10.3 H0.5 Z M10.7 1.6 L21 0.2 V10.3 H10.7 Z M0.5 11.5 H9.5 V20 L0.5 18.9 Z M10.7 11.5 H21 V21.7 L10.7 20.3 Z" fill="#fff"/></svg><svg style="position:absolute;left:62.55px;top:993.48px" width="20" height="20" viewBox="0 0 20 20"><circle cx="12" cy="8" r="6" fill="none" stroke="#fff" stroke-width="1.4"/><path d="M7.8 12.2 L1.5 18.5" stroke="#fff" stroke-width="1.6"/></svg><svg style="position:absolute;left:110.91px;top:992.43px" width="20" height="20" viewBox="0 0 20 20"><rect x="2.5" y="5.5" width="11" height="10" fill="none" stroke="#fff" stroke-width="1.2"/><path d="M1 3.5 H15 M1 17.5 H15 M17 3 V9 M17 11 V17" stroke="#fff" stroke-width="1.2"/></svg><div style="position:absolute;left:148.97px;top:985.39px;width:45.52px;height:37.11px;background:#3b3a39;border:1px solid #4e4d4c;"><div style="position:absolute;left:9.76px;top:6.5px"><svg width="24" height="24" viewBox="0 0 24 24" style="display:block"><defs><radialGradient id="ffa" cx="0.7" cy="0.25" r="0.9"><stop offset="0" stop-color="#ffe040"/><stop offset="0.45" stop-color="#ff9020"/><stop offset="1" stop-color="#e02860"/></radialGradient><radialGradient id="ffb" cx="0.5" cy="0.4" r="0.6"><stop offset="0" stop-color="#9a40e8"/><stop offset="1" stop-color="#5a2ad0"/></radialGradient></defs><path d="M12 2.5 C17 2 21.5 6.5 21.5 12.5 A9.5 9.5 0 0 1 2.5 12.5 C2.5 9 4 6.5 5.5 5 C5.5 7 6.5 8 7.5 8.5 C8 5 10 3.5 12 2.5 Z" fill="url(#ffa)"/><path d="M16 3 C19 4.5 21 8 21.3 11 C20 8 18 6.5 16.5 6 Z" fill="#ffd040"/><circle cx="12.3" cy="13" r="5" fill="url(#ffb)"/><path d="M7 10.5 Q9.5 9 12 10 Q10 11 9.5 13 Z" fill="#ff9a30"/></svg></div></div><div style="position:absolute;left:197.75px;top:985.39px;width:45.1px;height:37.11px;background:#3b3a39;border:1px solid #4e4d4c;"><div style="position:absolute;left:9.55px;top:6.5px"><svg width="24" height="24" viewBox="0 0 24 24" style="display:block"><circle cx="12" cy="12" r="11" fill="#6ab04a"/><circle cx="12" cy="12" r="9.5" fill="#78bc52"/><path d="M7 6 H9.5 V13 Q9.5 15.5 12 15.5 Q14.5 15.5 14.5 13 V6 H17 V16.5 Q17 18 18 18.5 L15.5 19 L14.8 17 Q13.5 18.2 11.5 18 Q10 17.9 9.5 17 V21 H7 Z" fill="#fff"/></svg></div></div><div style="position:absolute;left:246.53px;top:985.39px;width:46.26px;height:37.11px;background:linear-gradient(#f3c420,#e9951d);border:1px solid #f0c040;"><div style="position:absolute;left:10.13px;top:6.5px"><svg width="24" height="24" viewBox="0 0 24 24" style="display:block"><path d="M11.5 2 Q20 2 20.5 9.5 Q21 16 13.5 17 L11 20 V17 Q3.5 16 3.5 9.5 Q3.5 2 11.5 2 Z" fill="#fff" stroke="#7d5ad0" stroke-width="2.4"/><path d="M8.2 5.5 Q7.2 6.5 8.7 9.5 Q10.7 13 14 13.8 Q15.3 14 15.8 12.8 L14.4 11.3 L13 12 Q11.2 11 10.2 8.8 L11 7.3 L9.5 5.5 Z" fill="#7d5ad0"/><rect x="12.5" y="11.5" width="11" height="11" rx="3" fill="#e8382c"/><text x="15.6" y="20.6" font-size="9" font-weight="bold" font-family="Liberation Sans" fill="#fff">5</text></svg></div></div><div style="position:absolute;left:295.73px;top:985.39px;width:40.9px;height:37.11px;background:#3b3a39;border:1px solid #4e4d4c;"><div style="position:absolute;left:7.45px;top:6.5px"><svg width="24" height="24" viewBox="0 0 24 24" style="display:block"><circle cx="12" cy="12" r="10.5" fill="#db4437"/><path d="M12 12 L21.1 6.75 A10.5 10.5 0 0 1 12 22.5 Z" fill="#f4c20d"/><path d="M12 12 L12 22.5 A10.5 10.5 0 0 1 2.9 6.75 Z" fill="#0f9d58"/><circle cx="12" cy="12" r="4.8" fill="#fff"/><circle cx="12" cy="12" r="3.8" fill="#4285f4"/><circle cx="17" cy="17" r="6.5" fill="#7a50c8"/><text x="14.3" y="20.5" font-size="9" font-family="Liberation Sans" fill="#fff">0</text></svg></div></div><div style="position:absolute;left:344.62px;top:985.39px;width:45.63px;height:37.11px;background:#3b3a39;border:1px solid #4e4d4c;"><div style="position:absolute;left:9.81px;top:6.5px"><svg width="24" height="24" viewBox="0 0 24 24" style="display:block"><rect width="24" height="24" fill="#ef443b"/><path d="M3.5 12 L9 6.5 L14.5 12 L9 17.5 Z" fill="#fff"/><path d="M13.5 6.2 L19.3 12 L13.5 17.8 L12 16.3 L16.3 12 L12 7.7 Z" fill="#fff"/></svg></div></div><div style="position:absolute;left:393.71px;top:985.39px;width:45.52px;height:37.11px;background:#3b3a39;border:1px solid #4e4d4c;"><div style="position:absolute;left:9.76px;top:6.5px"><svg width="24" height="24" viewBox="0 0 24 24" style="display:block"><rect width="24" height="24" fill="#ef443b"/><path d="M3.5 12 L9 6.5 L14.5 12 L9 17.5 Z" fill="#fff"/><path d="M13.5 6.2 L19.3 12 L13.5 17.8 L12 16.3 L16.3 12 L12 7.7 Z" fill="#fff"/></svg></div></div><div style="position:absolute;left:442.81px;top:985.39px;width:45.52px;height:37.11px;background:#5b5a59;border:1px solid #8a8988;"><div style="position:absolute;left:9.76px;top:6.5px"><svg width="24" height="24" viewBox="0 0 16 16" style="display:block"><defs><radialGradient id="tbw" cx="0.35" cy="0.3" r="0.8"><stop offset="0" stop-color="#8cc4f4"/><stop offset="0.55" stop-color="#2a74cc"/><stop offset="1" stop-color="#143e8c"/></radialGradient></defs><circle cx="8" cy="8" r="7.5" fill="url(#tbw)"/><path d="M4 5 Q5.5 11 12 12" fill="none" stroke="#e0ecff" stroke-width="1.1"/><path d="M6 3.5 Q7.5 8.5 12.5 9" fill="none" stroke="#c0d8f8" stroke-width="0.8"/></svg></div></div><div style="position:absolute;left:338.52px;top:985.39px;width:1.58px;height:37.11px;background:#4e4d4c;"></div><svg style="position:absolute;left:1054.46px;top:1000.84px" width="10" height="6" viewBox="0 0 10 6"><path d="M1 5 L5 1 L9 5 Z" fill="#fff"/></svg><svg style="position:absolute;left:1074.96px;top:995.58px" width="18" height="16" viewBox="0 0 18 16"><rect x="3.5" y="2.5" width="13" height="9" fill="none" stroke="#ddd" stroke-width="1.1"/><path d="M10 11.5 V14 M6 14.5 H14 M1 1 V8 M1 1 H4" stroke="#ddd" stroke-width="1.1"/></svg><svg style="position:absolute;left:1099.66px;top:995.06px" width="17" height="16" viewBox="0 0 17 16"><path d="M1 5.5 H4 L8 2 V14 L4 10.5 H1 Z" fill="none" stroke="#ddd" stroke-width="1.1"/><path d="M10.5 5.5 Q12 8 10.5 10.5 M12.5 3.5 Q15 8 12.5 12.5" fill="none" stroke="#ddd" stroke-width="1.1"/></svg><div style="position:absolute;left:1126.47px;top:998.1px;font-size:12.5px;line-height:12.5px;white-space:nowrap;transform:scaleX(0.88);transform-origin:0 0;color:#e8e8e8;">РУС</div><div style="position:absolute;left:1174.31px;top:988.95px;font-size:12.5px;line-height:12.5px;white-space:nowrap;transform:scaleX(0.9);transform-origin:0 0;color:#e8e8e8;">21:11</div><div style="position:absolute;left:1161.69px;top:1007.56px;font-size:12.5px;line-height:12.5px;white-space:nowrap;transform:scaleX(0.87);transform-origin:0 0;color:#e8e8e8;">26.03.2020</div><svg style="position:absolute;left:1232.65px;top:991.38px" width="26" height="26" viewBox="0 0 26 26"><path d="M1 1 H16 V12 H8 L5 15 V12 H1 Z" fill="#eee"/><path d="M3.5 4 H13.5 M3.5 7 H13.5 M3.5 10 H10" stroke="#222" stroke-width="1"/><circle cx="16" cy="16" r="6.5" fill="#3a3a3a" stroke="#bbb" stroke-width="1.2"/><text x="13.3" y="20" font-size="10" fill="#eee" font-family="Liberation Sans">1</text></svg></div><div style="position:absolute;left:350px;top:66px;width:1px;height:936px;background:#333;"></div><div style="position:absolute;left:0px;top:1040px;width:1920px;height:40px;background:linear-gradient(to bottom,#20242c 0px,#20242c 0.6px,#a8b8cc 1.2px,#9cb0c8 2px,#7c90aa 4px,#4a5870 7px,#26303f 10px,#18202e 13px,#141c2a 40px);"></div><div style="position:absolute;left:8px;top:1041px"><svg width="38" height="38" viewBox="0 0 38 38" style="display:block"><defs><radialGradient id="so" cx="0.5" cy="0.3" r="0.7"><stop offset="0" stop-color="#6ab0e0"/><stop offset="0.6" stop-color="#1a5a9a"/><stop offset="1" stop-color="#0a2a5a"/></radialGradient></defs><circle cx="19" cy="19" r="18" fill="url(#so)" stroke="#4a7aa8" stroke-width="1"/><path d="M9 10 Q13 8.5 18 10.5 L17 17.5 Q12.5 15.5 8 17 Z" fill="#f05a28"/><path d="M19.5 11 Q24 13 28.5 11 L27.5 18.5 Q23 20 18.5 18 Z" fill="#7ac040"/><path d="M8 18.5 Q12.5 17 17 19 L16 26 Q11.5 24 7 25.5 Z" fill="#2a9ae0"/><path d="M18.5 19.5 Q23 21.5 27.5 19.5 L26.5 27 Q22 28.5 17.5 26.5 Z" fill="#f8c020"/><ellipse cx="19" cy="11" rx="12" ry="7" fill="#fff" opacity="0.18"/></svg></div><div style="position:absolute;left:58px;top:1045px;width:8px;height:30px;background-image:radial-gradient(circle,#5a6a80 0.9px,transparent 1.1px);background-size:4px 4px;"></div><div style="position:absolute;left:89px;top:1047px"><svg width="32" height="29" viewBox="0 0 32 29" style="display:block"><path d="M1 3 H9 L11 5 H30 V26 H1 Z" fill="#e8c870"/><rect x="4" y="3" width="20" height="6" fill="#fff"/><rect x="6" y="4" width="3" height="2" fill="#2ab040"/><rect x="13" y="5" width="3" height="2" fill="#d83030"/><rect x="20" y="6" width="3" height="2" fill="#2a90e0"/><path d="M1 9 H31 V26 H1 Z" fill="#f8e098"/><path d="M5 18 H25 V28 H21 V21 H9 V28 H5 Z" fill="#7ac0e8"/><rect x="5" y="16.5" width="20" height="2.5" fill="#a8d8f4"/></svg></div><div style="position:absolute;left:138px;top:1041px;width:58px;height:37.5px;border:1px solid #7a8290;border-radius:3px;background:linear-gradient(to bottom,#a8b0bc 0%,#5a6270 35%,#343c4a 60%,#283040 100%);box-shadow:inset 0 0 0 1px rgba(255,255,255,0.15);"></div><div style="position:absolute;left:151px;top:1043.5px"><svg width="31" height="31" viewBox="0 0 24 24" style="display:block"><defs><radialGradient id="ffa" cx="0.7" cy="0.25" r="0.9"><stop offset="0" stop-color="#ffe040"/><stop offset="0.45" stop-color="#ff9020"/><stop offset="1" stop-color="#e02860"/></radialGradient><radialGradient id="ffb" cx="0.5" cy="0.4" r="0.6"><stop offset="0" stop-color="#9a40e8"/><stop offset="1" stop-color="#5a2ad0"/></radialGradient></defs><path d="M12 2.5 C17 2 21.5 6.5 21.5 12.5 A9.5 9.5 0 0 1 2.5 12.5 C2.5 9 4 6.5 5.5 5 C5.5 7 6.5 8 7.5 8.5 C8 5 10 3.5 12 2.5 Z" fill="url(#ffa)"/><path d="M16 3 C19 4.5 21 8 21.3 11 C20 8 18 6.5 16.5 6 Z" fill="#ffd040"/><circle cx="12.3" cy="13" r="5" fill="url(#ffb)"/><path d="M7 10.5 Q9.5 9 12 10 Q10 11 9.5 13 Z" fill="#ff9a30"/></svg></div><div style="position:absolute;left:214px;top:1046px"><svg width="29" height="28" viewBox="0 0 29 28" style="display:block"><circle cx="14.5" cy="14" r="13.5" fill="#6a9a2a"/><circle cx="14.5" cy="14" r="12" fill="#b8e060"/><g stroke="#e8f8b0" stroke-width="1.2"><path d="M14.5 2.5 V25.5 M3 14 H26 M6.5 6 L22.5 22 M22.5 6 L6.5 22"/></g><path d="M1 8 L22 26" stroke="#a0402a" stroke-width="2"/></svg></div><div style="position:absolute;left:276.5px;top:1045.5px"><svg width="29" height="29" viewBox="0 0 29 29" style="display:block"><circle cx="14.5" cy="14.5" r="14" fill="#2a9ed8"/><path d="M6 14 L22 7.5 L19.5 21.5 L14.5 18 L12 20.5 L12 16.5 L19 10.5 L10.5 15.5 Z" fill="#fff"/></svg></div><div style="position:absolute;left:338px;top:1045px"><svg width="30.5" height="30.5" viewBox="0 0 24 24" style="display:block"><circle cx="12" cy="12" r="10.5" fill="#db4437"/><path d="M12 12 L21.1 6.75 A10.5 10.5 0 0 1 12 22.5 Z" fill="#f4c20d"/><path d="M12 12 L12 22.5 A10.5 10.5 0 0 1 2.9 6.75 Z" fill="#0f9d58"/><circle cx="12" cy="12" r="4.8" fill="#fff"/><circle cx="12" cy="12" r="3.8" fill="#4285f4"/></svg></div><div style="position:absolute;left:385.8px;top:1041px;width:50.2px;height:37.5px;border:1px solid #6a7280;border-radius:3px;background:linear-gradient(to bottom,#8890a0 0%,#4a5260 35%,#2a3242 60%,#222a38 100%);"></div><div style="position:absolute;left:395px;top:1043px"><svg width="32" height="32" viewBox="0 0 32 32" style="display:block"><rect x="15" y="1" width="14" height="12" fill="#d8d8d8" stroke="#222" stroke-width="1"/><rect x="17" y="3" width="10" height="8" fill="#1010c8"/><path d="M13 14 H30 L31 17 H12 Z" fill="#e0e0e0" stroke="#222" stroke-width="0.8"/><rect x="3" y="14" width="14" height="12" fill="#d8d8d8" stroke="#222" stroke-width="1"/><rect x="5" y="16" width="10" height="8" fill="#1010c8"/><path d="M1 27 H18 L19 30.5 H0 Z" fill="#e0e0e0" stroke="#222" stroke-width="0.8"/><path d="M22 6 L10 17 H15 L9 25 L22 13 H17 Z" fill="#f8f020" stroke="#333" stroke-width="0.6"/></svg></div><div style="position:absolute;left:437.5px;top:1041px;width:1.5px;height:37.5px;background:#4a5464;"></div><div style="position:absolute;left:442px;top:1041px;width:1.5px;height:37.5px;background:#4a5464;"></div><div style="position:absolute;left:461px;top:1044px"><svg width="32" height="32" viewBox="0 0 32 32" style="display:block"><path d="M0.5 0.5 H28 L31.5 4 V31.5 H0.5 Z" fill="#2050c8" stroke="#1a3aa0" stroke-width="1"/><rect x="8" y="1" width="15" height="8" fill="#d8d8d8"/><rect x="17" y="2" width="3.5" height="6" fill="#2050c8"/><rect x="4" y="14" width="24" height="17" fill="#fff"/><path d="M6 18 H26 M6 21.5 H26 M6 25 H17" stroke="#d82828" stroke-width="1.2"/><text x="17" y="29.5" font-size="6.5" font-family="Liberation Mono" fill="#555">64</text></svg></div><div style="position:absolute;left:510px;top:1041px;width:58px;height:37.5px;border:1px solid #9aa2b0;border-radius:3px;background:linear-gradient(to bottom,#d8dee6 0%,#9aa2ae 40%,#6a7280 70%,#5a6270 100%);"></div><div style="position:absolute;left:523px;top:1044px"><svg width="32" height="32" viewBox="0 0 24 24" style="display:block"><rect width="24" height="24" fill="#ef443b"/><path d="M3.5 12 L9 6.5 L14.5 12 L9 17.5 Z" fill="#fff"/><path d="M13.5 6.2 L19.3 12 L13.5 17.8 L12 16.3 L16.3 12 L12 7.7 Z" fill="#fff"/></svg></div><div style="position:absolute;left:1713px;top:1045px;width:8px;height:30px;background-image:radial-gradient(circle,#5a6a80 0.9px,transparent 1.1px);background-size:4px 4px;"></div><div style="position:absolute;left:1729.5px;top:1051.33px;font-size:13.5px;line-height:13.5px;white-space:nowrap;color:#f0f0f0;">EN</div><svg style="position:absolute;left:1757px;top:1053px" width="10" height="6" viewBox="0 0 10 6"><path d="M1 5.5 L5 1 L9 5.5 Z" fill="#fff"/></svg><svg style="position:absolute;left:1781px;top:1052px" width="17" height="16" viewBox="0 0 17 16"><path d="M1 5 H4 L8.5 1 V15 L4 11 H1 Z" fill="#e8e8e8"/><path d="M11 5.5 Q12.5 8 11 10.5 M13.5 3.5 Q16 8 13.5 12.5" fill="none" stroke="#e8e8e8" stroke-width="1.1"/></svg><svg style="position:absolute;left:1805px;top:1050px" width="19" height="19" viewBox="0 0 19 19"><path d="M2 1 V18" stroke="#f0f0f0" stroke-width="1.6"/><path d="M3 2 H12 L10 5.5 L12 9 H3 Z" fill="#f0f0f0"/><circle cx="13" cy="13" r="5" fill="#e02020" stroke="#fff" stroke-width="1"/><path d="M11 11 L15 15 M15 11 L11 15" stroke="#fff" stroke-width="1.4"/></svg><div style="position:absolute;left:1853px;top:1046.03px;font-size:13.5px;line-height:13.5px;white-space:nowrap;transform:scaleX(0.86);transform-origin:0 0;color:#f0f0f0;">19:11</div><div style="position:absolute;left:1839px;top:1063.03px;font-size:13.5px;line-height:13.5px;white-space:nowrap;transform:scaleX(0.82);transform-origin:0 0;color:#f0f0f0;">26.03.2020</div><div style="position:absolute;left:1906px;top:1041px;width:14px;height:39px;border:1px solid #8a9aac;border-right:none;background:linear-gradient(to bottom,#5a6a80,#1a2230 35%,#141c28);"></div></body></html>
